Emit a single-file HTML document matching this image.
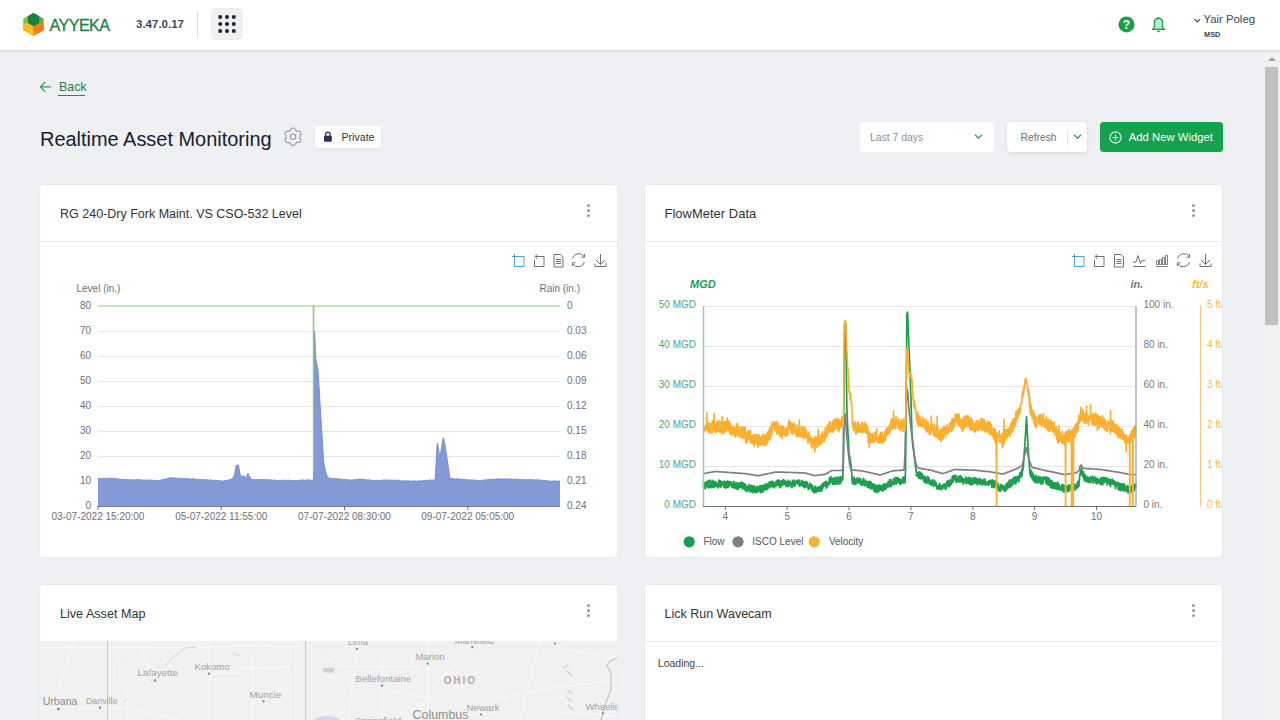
<!DOCTYPE html>
<html>
<head>
<meta charset="utf-8">
<title>Realtime Asset Monitoring</title>
<style>
*{box-sizing:border-box;margin:0;padding:0}
html,body{width:1280px;height:720px;overflow:hidden}
body{background:#EFF0F4;font-family:"Liberation Sans",sans-serif;position:relative;color:#333}
.abs{position:absolute}
#header{position:absolute;left:0;top:0;width:1280px;height:51px;background:#fff;border-bottom:1px solid #DEDFE4;box-shadow:0 1px 1px rgba(0,0,0,0.06)}
.txt{position:absolute;white-space:nowrap;line-height:1}
.card{position:absolute;background:#fff;border-radius:3px;box-shadow:0 0 0 1px rgba(0,0,0,0.025)}
.card .hd{position:absolute;left:0;top:0;right:0;height:57px;border-bottom:1px solid #E9EAEE}
.card .ttl{position:absolute;left:20px;top:22.5px;font-size:12.5px;color:#333;white-space:nowrap;line-height:1}
.kebab{position:absolute;width:3px;height:3px;border-radius:50%;background:#999}
.btn{position:absolute;background:#fff;border-radius:4px}
</style>
</head>
<body>
<div id="header">
  <svg class="abs" style="left:0;top:0" width="260" height="50" viewBox="0 0 260 50">
    <!-- hexagon logo -->
    <polygon points="33.5,13 43.5,18.8 43.5,30.2 33.5,36 23.5,30.2 23.5,18.8" fill="#F2A51C"/>
    <polygon points="23.5,18.8 33.5,13 33.5,25 23.5,30.2" fill="#86C23F"/>
    <polygon points="33.5,13 43.5,18.8 43.5,30.2 33.5,25" fill="#73A83C"/>
    <polygon points="23.5,24.5 33.5,30.2 33.5,36 23.5,30.2" fill="#F6C51A"/>
    <polygon points="33.5,30.2 43.5,24.5 43.5,30.2 33.5,36" fill="#EF8C1E"/>
    <polygon points="23.5,24.5 28.5,21.7 33.5,24.5 33.5,30.2 28.5,33 23.5,30.2" fill="#F4BC1C"/>
    <polygon points="33.5,24.5 38.5,21.7 43.5,24.5 43.5,30.2 38.5,33 33.5,30.2" fill="#EE7F1C"/>
    <polygon points="33.5,13 39.2,16.3 39.2,23 33.5,26.3 27.8,23 27.8,16.3" fill="#18803E"/>
    <!-- grid button -->
    <rect x="211" y="8" width="32" height="32" rx="5" fill="#EFF0F4"/>
    <g fill="#1E222B">
      <circle cx="220.2" cy="16.9" r="2"/><circle cx="227" cy="16.9" r="2"/><circle cx="233.8" cy="16.9" r="2"/>
      <circle cx="220.2" cy="24" r="2"/><circle cx="227" cy="24" r="2"/><circle cx="233.8" cy="24" r="2"/>
      <circle cx="220.2" cy="31" r="2"/><circle cx="227" cy="31" r="2"/><circle cx="233.8" cy="31" r="2"/>
    </g>
    <line x1="197.5" y1="12" x2="197.5" y2="38" stroke="#D9DADF" stroke-width="1"/>
  </svg>
  <div class="txt" style="left:49.5px;top:17px;font-size:16.2px;font-weight:normal;-webkit-text-stroke:0.3px #1D7E43;color:#1D7E43;letter-spacing:-0.6px">AYYEKA</div>
  <div class="txt" style="left:136px;top:18.5px;font-size:11.5px;font-weight:bold;color:#3B4658">3.47.0.17</div>
  <!-- right header -->
  <svg class="abs" style="left:1110px;top:0" width="170" height="50" viewBox="1110 0 170 50">
    <circle cx="1126.5" cy="24.4" r="8" fill="#1A9E4B"/>
    <text x="1126.5" y="28.8" font-size="12" font-weight="bold" fill="#fff" text-anchor="middle" font-family="Liberation Sans">?</text>
    <path d="M1152.6,29.3 L1164.4,29.3 L1162.6,27.4 L1162.6,22.6 C1162.6,19.9 1160.9,18.3 1158.5,18.3 C1156.1,18.3 1154.4,19.9 1154.4,22.6 L1154.4,27.4 Z" fill="#BDE8CB" stroke="#1A9E4B" stroke-width="1.3" stroke-linejoin="round"/>
    <path d="M1157.2,31.4 L1159.8,31.4" stroke="#1A9E4B" stroke-width="1.5"/>
    <circle cx="1158.5" cy="17.8" r="1" fill="#1A9E4B"/>
    <polyline points="1194.6,19.2 1197.3,22 1200,19.2" fill="none" stroke="#3B4658" stroke-width="1.2"/>
  </svg>
  <div class="txt" style="left:1203.5px;top:14px;font-size:11.35px;color:#3B4658">Yair Poleg</div>
  <div class="txt" style="left:1204px;top:30.5px;font-size:7.4px;font-weight:bold;color:#3B4658">MSD</div>
</div>

<!-- scrollbar -->
<div class="abs" style="left:1264px;top:52px;width:16px;height:668px;background:#F1F1F1"></div>
<svg class="abs" style="left:1264px;top:51px" width="16" height="20"><polygon points="4,10 8,6 12,10" fill="#A3A3A3"/></svg>
<div class="abs" style="left:1265px;top:67px;width:13px;height:258px;background:#C1C1C1"></div>

<!-- back -->
<svg class="abs" style="left:38px;top:80px" width="16" height="14" viewBox="38 80 16 14">
  <path d="M51,86.9 L40.5,86.9 M45.3,82 L40.4,86.9 L45.3,91.8" fill="none" stroke="#2E9D63" stroke-width="1.2"/>
</svg>
<div class="txt" style="left:59px;top:80.5px;font-size:12.4px;color:#1E8050">Back</div>
<div class="abs" style="left:58px;top:95px;width:27px;height:1px;background:#1E8A55"></div>

<div class="txt" style="left:40px;top:130px;font-size:19.95px;color:#171D2E">Realtime Asset Monitoring</div>
<svg class="abs" style="left:282px;top:126px" width="22" height="22" viewBox="282 126 22 22">
  <path fill="none" stroke="#9EA0A9" stroke-width="1.25" stroke-linejoin="round" d="M293.00,128.20 L293.30,128.21 L293.60,128.22 L293.90,128.25 L294.20,128.28 L294.48,128.41 L294.71,128.74 L294.92,129.09 L295.11,129.45 L295.27,129.80 L295.42,130.15 L295.62,130.31 L295.85,130.41 L296.07,130.51 L296.29,130.62 L296.50,130.74 L296.71,130.86 L296.91,131.00 L297.11,131.14 L297.31,131.28 L297.55,131.38 L297.92,131.33 L298.31,131.30 L298.72,131.28 L299.13,131.28 L299.53,131.32 L299.78,131.51 L299.96,131.75 L300.13,131.99 L300.29,132.24 L300.45,132.50 L300.59,132.76 L300.73,133.03 L300.86,133.30 L300.97,133.58 L301.01,133.89 L300.84,134.25 L300.64,134.61 L300.42,134.95 L300.19,135.27 L299.97,135.57 L299.93,135.83 L299.96,136.07 L299.98,136.31 L300.00,136.56 L300.00,136.80 L300.00,137.04 L299.98,137.29 L299.96,137.53 L299.93,137.77 L299.97,138.03 L300.19,138.33 L300.42,138.65 L300.64,138.99 L300.84,139.35 L301.01,139.71 L300.97,140.02 L300.86,140.30 L300.73,140.57 L300.59,140.84 L300.45,141.10 L300.29,141.36 L300.13,141.61 L299.96,141.85 L299.78,142.09 L299.53,142.28 L299.13,142.32 L298.72,142.32 L298.31,142.30 L297.92,142.27 L297.55,142.22 L297.31,142.32 L297.11,142.46 L296.91,142.60 L296.71,142.74 L296.50,142.86 L296.29,142.98 L296.07,143.09 L295.85,143.19 L295.62,143.29 L295.42,143.45 L295.27,143.80 L295.11,144.15 L294.92,144.51 L294.71,144.86 L294.48,145.19 L294.20,145.32 L293.90,145.35 L293.60,145.38 L293.30,145.39 L293.00,145.40 L292.70,145.39 L292.40,145.38 L292.10,145.35 L291.80,145.32 L291.52,145.19 L291.29,144.86 L291.08,144.51 L290.89,144.15 L290.73,143.80 L290.58,143.45 L290.38,143.29 L290.15,143.19 L289.93,143.09 L289.71,142.98 L289.50,142.86 L289.29,142.74 L289.09,142.60 L288.89,142.46 L288.69,142.32 L288.45,142.22 L288.08,142.27 L287.69,142.30 L287.28,142.32 L286.87,142.32 L286.47,142.28 L286.22,142.09 L286.04,141.85 L285.87,141.61 L285.71,141.36 L285.55,141.10 L285.41,140.84 L285.27,140.57 L285.14,140.30 L285.03,140.02 L284.99,139.71 L285.16,139.35 L285.36,138.99 L285.58,138.65 L285.81,138.33 L286.03,138.03 L286.07,137.77 L286.04,137.53 L286.02,137.29 L286.00,137.04 L286.00,136.80 L286.00,136.56 L286.02,136.31 L286.04,136.07 L286.07,135.83 L286.03,135.57 L285.81,135.27 L285.58,134.95 L285.36,134.61 L285.16,134.25 L284.99,133.89 L285.03,133.58 L285.14,133.30 L285.27,133.03 L285.41,132.76 L285.55,132.50 L285.71,132.24 L285.87,131.99 L286.04,131.75 L286.22,131.51 L286.47,131.32 L286.87,131.28 L287.28,131.28 L287.69,131.30 L288.08,131.33 L288.45,131.38 L288.69,131.28 L288.89,131.14 L289.09,131.00 L289.29,130.86 L289.50,130.74 L289.71,130.62 L289.93,130.51 L290.15,130.41 L290.38,130.31 L290.58,130.15 L290.73,129.80 L290.89,129.45 L291.08,129.09 L291.29,128.74 L291.52,128.41 L291.80,128.28 L292.10,128.25 L292.40,128.22 L292.70,128.21Z"/>
  <circle cx="293" cy="136.8" r="2.7" fill="none" stroke="#9EA0A9" stroke-width="1.25"/>
</svg>
<div class="btn" style="left:315px;top:126px;width:66px;height:22px;border-radius:3px;box-shadow:0 1px 3px rgba(0,0,0,0.08)"></div>
<svg class="abs" style="left:322px;top:130px" width="12" height="14" viewBox="322 130 12 14">
  <path d="M325.6,136 v-1.6 a2.3,2.3 0 0 1 4.6,0 v1.6" fill="none" stroke="#2F2E5A" stroke-width="1.3"/>
  <rect x="324" y="135.8" width="7.8" height="5.9" rx="1" fill="#2F2E5A"/>
</svg>
<div class="txt" style="left:341.5px;top:131.5px;font-size:10.6px;color:#333">Private</div>

<div class="btn" style="left:860px;top:122px;width:134px;height:30px"></div>
<div class="txt" style="left:870px;top:133px;font-size:10.4px;color:#8D919B">Last 7 days</div>
<svg class="abs" style="left:970px;top:130px" width="16" height="14"><polyline points="4.8,4.6 8.5,8.3 12.2,4.6" fill="none" stroke="#2A9D66" stroke-width="1.3"/></svg>

<div class="btn" style="left:1007px;top:122px;width:80px;height:30px;box-shadow:0 1px 4px rgba(0,0,0,0.12)"></div>
<div class="txt" style="left:1020.5px;top:133px;font-size:10.3px;color:#6B6F78">Refresh</div>
<div class="abs" style="left:1067px;top:129.5px;width:1px;height:15px;background:#E2E3E7"></div>
<svg class="abs" style="left:1069px;top:130px" width="16" height="14"><polyline points="4.8,4.6 8.5,8.3 12.2,4.6" fill="none" stroke="#2A9D66" stroke-width="1.3"/></svg>

<div class="btn" style="left:1100px;top:122px;width:123px;height:30px;background:#15A14E;border-radius:3.5px"></div>
<svg class="abs" style="left:1108px;top:130px" width="16" height="16" viewBox="1108 130 16 16">
  <circle cx="1115.5" cy="137.5" r="5.6" fill="none" stroke="#E8F8EE" stroke-width="1.1"/>
  <path d="M1115.5,134.6 v5.8 M1112.6,137.5 h5.8" stroke="#E8F8EE" stroke-width="1.1"/>
</svg>
<div class="txt" style="left:1128.8px;top:131.5px;font-size:11.3px;color:#fff">Add New Widget</div>

<!-- cards -->
<div class="card" style="left:40px;top:185px;width:577px;height:372px">
  <div class="hd"></div>
  <div class="ttl" style="left:20px;top:22.5px">RG 240-Dry Fork Maint. VS CSO-532 Level</div>
  <div class="kebab" style="left:546.8px;top:18.5px"></div><div class="kebab" style="left:546.8px;top:23.9px"></div><div class="kebab" style="left:546.8px;top:29.4px"></div>
</div>
<div class="card" style="left:645px;top:185px;width:577px;height:372px;overflow:hidden">
  <div class="hd"></div>
  <div class="ttl" style="left:19.5px;top:22.3px;font-size:13px">FlowMeter Data</div>
  <div class="kebab" style="left:546.8px;top:18.5px"></div><div class="kebab" style="left:546.8px;top:23.9px"></div><div class="kebab" style="left:546.8px;top:29.4px"></div>
</div>
<div class="card" style="left:40px;top:585px;width:577px;height:200px;overflow:hidden">
  <div class="hd"></div>
  <div class="ttl" style="left:20px;top:22.8px;font-size:12.6px">Live Asset Map</div>
  <div class="kebab" style="left:546.8px;top:18.5px"></div><div class="kebab" style="left:546.8px;top:23.9px"></div><div class="kebab" style="left:546.8px;top:29.4px"></div>
</div>
<div class="card" style="left:645px;top:585px;width:577px;height:200px">
  <div class="hd"></div>
  <div class="ttl" style="left:19.5px;top:23.3px;font-size:12.5px">Lick Run Wavecam</div>
  <div class="kebab" style="left:546.8px;top:18.5px"></div><div class="kebab" style="left:546.8px;top:23.9px"></div><div class="kebab" style="left:546.8px;top:29.4px"></div>
  <div class="txt" style="left:12.8px;top:72.8px;font-size:10.5px;color:#444">Loading...</div>
</div>

<!-- map -->
<svg class="abs" style="left:40px;top:641px" width="577" height="79" viewBox="40 641 577 79">
<rect x="40" y="641" width="577" height="79" fill="#F1F1F1"/>
<g fill="none" stroke="#FAFAFA" stroke-width="1">
  <path d="M40,647 L120,647.5 L200,647 L240,646 L300,646.5"/>
  <path d="M73.6,641 L68,660 L60,685 L52.5,720"/>
  <path d="M114,641 L114,650 L120,660 L120,685 L127.5,691.5 L127,720"/>
  <path d="M137,641 L155,680.5 L175,700 L188,720"/>
  <path d="M209.5,641 L209.5,720"/>
  <path d="M209.5,673.6 L240,673.6"/>
  <path d="M40,708 L127.5,708 L165,716.5 L180,720"/>
  <path d="M263.4,641 L252.5,660 L252,720"/>
  <path d="M296,641 L296,720"/>
  <path d="M357,641 L357,655 L352.5,680 L348,720"/>
  <path d="M382,655 L382,720"/>
  <path d="M340,666.5 L420,666.5"/>
  <path d="M382,690 L440,700 L480,712"/>
  <path d="M312,650 L340,666"/>
  <path d="M428,641 L428,720"/>
  <path d="M472,647 L450,670 L430,690 L415,720"/>
  <path d="M540,641 L535,660 L525,700 L520,720"/>
  <path d="M555,643.5 L565,650 L600,655 L617,660"/>
  <path d="M490,700 L540,690 L590,683 L617,680"/>
  <path d="M430,718 L500,712 L560,712 L617,716"/>
  <path d="M240,668 L290,667"/>
</g>
<g fill="none" stroke="#C4C4C4" stroke-width="0.9">
  <path d="M107.5,641 L107.5,720"/>
  <path d="M305.6,641 L305.6,720"/>
</g>
<g fill="none" stroke="#B8B8B8" stroke-width="1">
  <path d="M617,658 L610,661 L607,666 L611,672 L611,690 L605,705 L601,720"/>
</g>
<g fill="none" stroke="#D3D3D3" stroke-width="1">
  <path d="M165,666.5 L172,658 L185,648 L196,647"/>
  <path d="M158,682 L150,681"/>
  <path d="M233,653 L240,656"/>
  <path d="M124,703 L128,698"/>
</g>
<path d="M323,668 L334.5,667.5 L333.5,672.8 L323.5,672.5 Z" fill="#CFCFCF"/>
<g fill="none" stroke="#CDCDCD" stroke-width="1.2">
  <path d="M563,668 L568,665 M567,671 L572,676 M567,690 L573,694 M566,697 L572,701 M568,705 L573,710"/>
</g>
<ellipse cx="327" cy="728" rx="18" ry="12" fill="#D3D5F1"/>
<g font-family="Liberation Sans" fill="#A3A3A3" font-size="9">
  <text x="42.7" y="705" font-size="10.6" fill="#8E8E8E">Urbana</text>
  <text x="86" y="704" font-size="8.8">Danville</text>
  <text x="137.6" y="676" font-size="9.8">Lafayette</text>
  <text x="194.5" y="670" font-size="9.6">Kokomo</text>
  <text x="249.6" y="697.5" font-size="9.8">Muncie</text>
  <text x="347.7" y="644.5" font-size="9.4">Lima</text>
  <text x="454.8" y="644" font-size="9.2">Mansfield</text>
  <text x="415.4" y="660" font-size="9.6">Marion</text>
  <text x="355.6" y="681.5" font-size="9.6">Bellefontaine</text>
  <text x="443.7" y="684" font-size="10" font-weight="bold" letter-spacing="1.9" fill="#ABABAB">OHIO</text>
  <text x="466.5" y="710.5" font-size="9.8">Newark</text>
  <text x="412.6" y="718.5" font-size="12.4" fill="#8E8E8E">Columbus</text>
  <text x="355" y="724" font-size="9.8">Springfield</text>
  <text x="585.5" y="709.5" font-size="9.6">Wheeling</text>
</g>
<g fill="#7A7A7A">
  <circle cx="58.4" cy="709" r="1.3"/><circle cx="100" cy="707.7" r="1.1"/><circle cx="155.2" cy="680.3" r="1.1"/>
  <circle cx="209" cy="673.7" r="1.1"/><circle cx="263.5" cy="701.4" r="1.1"/><circle cx="356.8" cy="648.9" r="1.1"/>
  <circle cx="472.3" cy="647.2" r="1.1"/><circle cx="555" cy="643.5" r="1.1"/><circle cx="427.8" cy="663.7" r="1.1"/>
  <circle cx="382" cy="685.7" r="1.1"/><circle cx="481" cy="714.5" r="1.1"/><circle cx="602.9" cy="713.3" r="1.1"/>
</g>

</svg>

<!-- chart 1 -->
<svg class="abs" style="left:0;top:0;font-family:'Liberation Sans',sans-serif" width="640" height="560" viewBox="0 0 640 560">
<line x1="98" y1="331.5" x2="560" y2="331.5" stroke="#E4E6EB" stroke-width="1"/>
<line x1="98" y1="356.5" x2="560" y2="356.5" stroke="#E4E6EB" stroke-width="1"/>
<line x1="98" y1="381.5" x2="560" y2="381.5" stroke="#E4E6EB" stroke-width="1"/>
<line x1="98" y1="406.5" x2="560" y2="406.5" stroke="#E4E6EB" stroke-width="1"/>
<line x1="98" y1="431.5" x2="560" y2="431.5" stroke="#E4E6EB" stroke-width="1"/>
<line x1="98" y1="456.5" x2="560" y2="456.5" stroke="#E4E6EB" stroke-width="1"/>
<line x1="98" y1="481.5" x2="560" y2="481.5" stroke="#E4E6EB" stroke-width="1"/>
<path d="M98,506 L98,478.7 L98.5,478.5 L99,478.9 L99.5,478.4 L100,478.7 L100.5,478.6 L101,478.3 L101.5,478.6 L102,478.3 L102.5,478.5 L103,478.2 L103.5,478.2 L104,478.4 L104.5,478.7 L105,478.2 L105.5,478.2 L106,478.5 L106.5,478.7 L107,478.4 L107.5,478.3 L108,478.6 L108.5,478 L109,478.5 L109.5,478.1 L110,478 L110.5,478 L111,478.2 L111.5,478.6 L112,478.1 L112.5,478.5 L113,478.6 L113.5,478.4 L114,478.6 L114.5,478.3 L115,478.3 L115.5,478.5 L116,478.8 L116.5,478.7 L117,478.7 L117.5,478.9 L118,478.9 L118.5,478.8 L119,479.2 L119.5,479.2 L120,478.9 L120.5,479.2 L121,479.2 L121.5,479.5 L122,479.4 L122.5,479.1 L123,479.7 L123.5,479.1 L124,479.4 L124.5,479.6 L125,479.3 L125.5,479.5 L126,479.2 L126.5,479.6 L127,479.7 L127.5,479.6 L128,479.8 L128.5,479.4 L129,479.7 L129.5,479.7 L130,479.7 L130.5,479.6 L131,479.9 L131.5,479.9 L132,479.6 L132.5,479.8 L133,479.4 L133.5,479.8 L134,479.8 L134.5,480 L135,479.9 L135.5,479.6 L136,479.6 L136.5,479.8 L137,479.4 L137.5,479.7 L138,479.5 L138.5,479.5 L139,479.5 L139.5,480 L140,479.5 L140.5,479.6 L141,479.8 L141.5,480.1 L142,479.6 L142.5,479.9 L143,479.9 L143.5,480.2 L144,480.2 L144.5,480.2 L145,479.8 L145.5,479.9 L146,479.9 L146.5,480.3 L147,480.4 L147.5,479.8 L148,479.9 L148.5,479.9 L149,479.9 L149.5,480.1 L150,480.2 L150.5,480 L151,479.8 L151.5,480.1 L152,480.1 L152.5,480.3 L153,480.6 L153.5,480.4 L154,480.3 L154.5,480.4 L155,480.4 L155.5,480 L156,480.6 L156.5,480.6 L157,480.7 L157.5,480.6 L158,480.4 L158.5,480.4 L159,480.2 L159.5,480.6 L160,480.2 L160.5,480.1 L161,480 L161.5,479.9 L162,479.8 L162.5,479.5 L163,479.3 L163.5,479.3 L164,479.1 L164.5,479.2 L165,478.8 L165.5,479.3 L166,479 L166.5,478.5 L167,478.4 L167.5,478.4 L168,478.2 L168.5,477.9 L169,478.3 L169.5,478.3 L170,477.8 L170.5,477.8 L171,477.6 L171.5,477.6 L172,477.8 L172.5,477.8 L173,478.2 L173.5,477.7 L174,477.7 L174.5,478.3 L175,478.1 L175.5,477.8 L176,478.1 L176.5,477.8 L177,478.1 L177.5,478.5 L178,478.4 L178.5,478.3 L179,478.1 L179.5,478.2 L180,478 L180.5,478.5 L181,478.3 L181.5,478.5 L182,478.2 L182.5,478.2 L183,478.6 L183.5,478.8 L184,478.7 L184.5,478.7 L185,478.7 L185.5,478.7 L186,478.4 L186.5,478.6 L187,478.5 L187.5,478.3 L188,478.3 L188.5,478.5 L189,478.5 L189.5,478.9 L190,479.1 L190.5,478.8 L191,479.1 L191.5,479.2 L192,479.2 L192.5,478.8 L193,478.7 L193.5,478.8 L194,478.8 L194.5,478.8 L195,479.1 L195.5,479.3 L196,479.3 L196.5,479.1 L197,479.2 L197.5,479.4 L198,478.9 L198.5,479.3 L199,479.5 L199.5,479.5 L200,479.5 L200.5,479.3 L201,479.1 L201.5,479.6 L202,479.3 L202.5,479.7 L203,479.8 L203.5,479.5 L204,479.5 L204.5,479.9 L205,479.8 L205.5,479.4 L206,479.4 L206.5,479.5 L207,480.1 L207.5,480 L208,479.6 L208.5,480.1 L209,480.2 L209.5,480.1 L210,479.9 L210.5,480 L211,479.8 L211.5,479.7 L212,480.4 L212.5,480.3 L213,480.2 L213.5,480.5 L214,480.2 L214.5,480.5 L215,480.5 L215.5,480.2 L216,480.2 L216.5,480.3 L217,480.3 L217.5,480.6 L218,480.4 L218.5,480.5 L219,480.3 L219.5,480.9 L220,480.6 L220.5,480.7 L221,480.8 L221.5,481 L222,480.7 L222.5,481.1 L223,480.9 L223.5,480.9 L224,480.9 L224.5,480.6 L225,481 L225.5,480.6 L226,480.4 L226.5,480.8 L227,480.2 L227.5,480.3 L228,480.3 L228.5,480 L229,479.7 L229.5,479.7 L230,479.6 L230.5,479.6 L231,479 L231.5,479.2 L232,478.8 L232.5,478 L233,477.6 L233.5,476.6 L234,475.8 L234.5,475.2 L235,472.1 L235.5,468.7 L236,465.5 L236.5,465.4 L237,465.3 L237.5,465.2 L238,465.1 L238.5,465 L239,468 L239.5,471 L240,474.1 L240.5,474.8 L241,475.5 L241.5,476.4 L242,477 L242.5,476.4 L243,475.8 L243.5,475.5 L244,475.8 L244.5,477.1 L245,478.3 L245.5,477.3 L246,477 L246.5,476.8 L247,476.2 L247.5,474.5 L248,473.2 L248.5,474.6 L249,475.5 L249.5,476.8 L250,477.2 L250.5,478.1 L251,478.7 L251.5,479.3 L252,479.3 L252.5,479.7 L253,479.6 L253.5,479.3 L254,479.8 L254.5,479.8 L255,479.3 L255.5,479.8 L256,479.4 L256.5,479.5 L257,479.8 L257.5,479.7 L258,479.3 L258.5,479.5 L259,479.5 L259.5,479.4 L260,479.3 L260.5,479.4 L261,479.7 L261.5,479.2 L262,479.5 L262.5,479.5 L263,479.2 L263.5,479.4 L264,479.6 L264.5,479.5 L265,479.2 L265.5,479.9 L266,479.8 L266.5,479.9 L267,479.4 L267.5,479.5 L268,479.4 L268.5,479.9 L269,479.6 L269.5,479.5 L270,479.8 L270.5,480.2 L271,480.1 L271.5,479.8 L272,479.7 L272.5,480.3 L273,480.1 L273.5,480.2 L274,479.8 L274.5,479.8 L275,480.3 L275.5,480.1 L276,479.9 L276.5,480.6 L277,480.4 L277.5,480.5 L278,480.1 L278.5,480.6 L279,480.1 L279.5,480.7 L280,480.5 L280.5,480.4 L281,480.5 L281.5,480.8 L282,480.3 L282.5,480.2 L283,480.5 L283.5,480.3 L284,480.2 L284.5,480.3 L285,480.2 L285.5,480.3 L286,480.4 L286.5,480.4 L287,480.7 L287.5,480.4 L288,480.5 L288.5,480.3 L289,480.4 L289.5,480.2 L290,480.3 L290.5,480.2 L291,480.7 L291.5,480.5 L292,480.3 L292.5,480.5 L293,480.8 L293.5,480.2 L294,480.7 L294.5,480.5 L295,480.5 L295.5,480.7 L296,480.4 L296.5,480.5 L297,480.6 L297.5,480.8 L298,480.3 L298.5,480.6 L299,480.5 L299.5,480.4 L300,480.2 L300.5,480.1 L301,479.9 L301.5,479.9 L302,479.9 L302.5,480.3 L303,479.9 L303.5,479.8 L304,479.8 L304.5,480.3 L305,480.3 L305.5,480.1 L306,479.8 L306.5,479.8 L307,479.9 L307.5,480 L308,479.8 L308.5,480 L309,479.8 L309.5,480.3 L310,480.3 L310.5,480 L311,479.8 L311.5,480.3 L312,479.9 L312.5,479.9 L313,479.7 L313.5,479.1 L314,376.3 L314.5,330.6 L315,340 L315.5,355 L316,360 L316.5,362.5 L317,365 L317.5,367.5 L318,370 L318.5,378.2 L319,386.4 L319.5,394.6 L320,402.9 L320.5,411.1 L321,419.2 L321.5,427.3 L322,435.4 L322.5,443.6 L323,451.7 L323.5,459.8 L324,464.2 L324.5,466.3 L325,468.4 L325.5,470.4 L326,472.5 L326.5,474.4 L327,475.6 L327.5,476 L328,476.9 L328.5,477.5 L329,478.4 L329.5,478.1 L330,478.1 L330.5,478.3 L331,478.2 L331.5,478.4 L332,478.3 L332.5,478.5 L333,478.5 L333.5,478.6 L334,478.7 L334.5,478.4 L335,478.4 L335.5,478.9 L336,478.4 L336.5,478.9 L337,478.8 L337.5,478.5 L338,479.1 L338.5,479.1 L339,479 L339.5,479.1 L340,479.2 L340.5,478.8 L341,479.1 L341.5,479.2 L342,479.4 L342.5,479.5 L343,479.5 L343.5,479.4 L344,479.7 L344.5,479.6 L345,479.6 L345.5,479.4 L346,479.3 L346.5,479.4 L347,479.6 L347.5,479.5 L348,480 L348.5,479.9 L349,480 L349.5,480 L350,480.1 L350.5,479.9 L351,479.6 L351.5,480.1 L352,480 L352.5,479.8 L353,479.7 L353.5,479.8 L354,479.3 L354.5,479.7 L355,479.3 L355.5,479.2 L356,479.2 L356.5,479.5 L357,479.1 L357.5,479.4 L358,479.5 L358.5,479.1 L359,479 L359.5,479 L360,479.1 L360.5,479.2 L361,479.2 L361.5,479.2 L362,478.9 L362.5,479 L363,479.1 L363.5,479.5 L364,479.3 L364.5,479.5 L365,479.2 L365.5,479.2 L366,479.4 L366.5,479.8 L367,479.8 L367.5,479.9 L368,479.7 L368.5,479.9 L369,479.9 L369.5,479.9 L370,479.7 L370.5,480.3 L371,479.9 L371.5,480.5 L372,480.5 L372.5,479.9 L373,480.3 L373.5,480.6 L374,480.7 L374.5,480.4 L375,480.3 L375.5,480.3 L376,480.8 L376.5,480.2 L377,480.5 L377.5,480.2 L378,480.4 L378.5,480.7 L379,480.1 L379.5,480.6 L380,480.3 L380.5,480.6 L381,480.4 L381.5,480.1 L382,480.5 L382.5,480.2 L383,479.9 L383.5,479.9 L384,480.2 L384.5,480.1 L385,480 L385.5,479.9 L386,480 L386.5,480 L387,480.3 L387.5,479.7 L388,480.2 L388.5,480.3 L389,479.8 L389.5,480.3 L390,480.1 L390.5,480.3 L391,479.9 L391.5,480 L392,480 L392.5,480.5 L393,480.2 L393.5,480.1 L394,480.1 L394.5,480.1 L395,479.9 L395.5,480 L396,480.5 L396.5,480.2 L397,480.7 L397.5,480.2 L398,480.2 L398.5,480.4 L399,480.2 L399.5,480.4 L400,480.8 L400.5,480.8 L401,480.8 L401.5,480.7 L402,480.9 L402.5,480.9 L403,480.7 L403.5,480.8 L404,480.4 L404.5,480.9 L405,480.7 L405.5,481 L406,480.9 L406.5,480.7 L407,480.5 L407.5,481.2 L408,480.6 L408.5,480.9 L409,480.8 L409.5,480.8 L410,481.2 L410.5,481.3 L411,480.8 L411.5,481.1 L412,480.9 L412.5,481 L413,480.9 L413.5,480.8 L414,480.8 L414.5,480.8 L415,481.3 L415.5,481 L416,480.8 L416.5,481.3 L417,481.3 L417.5,481 L418,480.7 L418.5,480.8 L419,480.7 L419.5,480.9 L420,480.7 L420.5,480.8 L421,480.7 L421.5,480.9 L422,481.1 L422.5,480.9 L423,480.6 L423.5,480.6 L424,480.6 L424.5,480.5 L425,480.4 L425.5,480.1 L426,480.2 L426.5,480.7 L427,480 L427.5,480.3 L428,480.3 L428.5,480.4 L429,479.9 L429.5,479.9 L430,479.8 L430.5,479.9 L431,480 L431.5,480.3 L432,480.2 L432.5,480.3 L433,479.7 L433.5,479.7 L434,480.1 L434.5,480.3 L435,480 L435.5,472.4 L436,464.6 L436.5,455.8 L437,445.2 L437.5,443.1 L438,446.5 L438.5,450 L439,452.3 L439.5,454.7 L440,457 L440.5,454 L441,451 L441.5,448 L442,444.9 L442.5,441.9 L443,438.8 L443.5,437.9 L444,440.3 L444.5,442.6 L445,445 L445.5,448.2 L446,451.5 L446.5,454.8 L447,458 L447.5,461.6 L448,465.1 L448.5,468.7 L449,471.9 L449.5,475.8 L450,478.3 L450.5,478.4 L451,478.5 L451.5,478.7 L452,478.3 L452.5,478.3 L453,478.3 L453.5,478.6 L454,478.8 L454.5,479 L455,478.9 L455.5,478.9 L456,479 L456.5,478.8 L457,478.9 L457.5,478.6 L458,479.2 L458.5,478.8 L459,479.3 L459.5,479.2 L460,479 L460.5,478.9 L461,479 L461.5,479.3 L462,479.4 L462.5,479 L463,479 L463.5,479.4 L464,479.5 L464.5,479.4 L465,479.3 L465.5,479.6 L466,479.2 L466.5,479.5 L467,479.6 L467.5,480 L468,479.8 L468.5,480 L469,479.7 L469.5,479.6 L470,479.7 L470.5,480.2 L471,480 L471.5,479.8 L472,479.6 L472.5,480 L473,480.2 L473.5,480 L474,479.9 L474.5,480.3 L475,480.5 L475.5,480 L476,479.9 L476.5,480.2 L477,480.2 L477.5,480.5 L478,480.2 L478.5,480.6 L479,480.6 L479.5,480.5 L480,480.3 L480.5,480.8 L481,480.3 L481.5,480.6 L482,480.1 L482.5,480.1 L483,480.4 L483.5,480 L484,480.4 L484.5,480 L485,479.8 L485.5,479.8 L486,479.8 L486.5,480 L487,480.1 L487.5,479.5 L488,479.6 L488.5,479.4 L489,479.9 L489.5,479.3 L490,479.2 L490.5,479.1 L491,479.3 L491.5,479.6 L492,479.6 L492.5,479.4 L493,479.5 L493.5,479.5 L494,479 L494.5,478.8 L495,479.3 L495.5,479.2 L496,478.7 L496.5,479.1 L497,478.9 L497.5,478.9 L498,478.9 L498.5,478.8 L499,478.7 L499.5,478.8 L500,478.9 L500.5,479.3 L501,478.7 L501.5,479.3 L502,478.8 L502.5,478.9 L503,479.2 L503.5,479.2 L504,479 L504.5,478.7 L505,479 L505.5,478.9 L506,479.3 L506.5,478.8 L507,478.9 L507.5,479.3 L508,478.7 L508.5,478.9 L509,479.2 L509.5,479.2 L510,478.7 L510.5,478.7 L511,478.7 L511.5,479.3 L512,478.9 L512.5,479.3 L513,479.4 L513.5,479 L514,479 L514.5,479.5 L515,479.2 L515.5,479 L516,479.4 L516.5,479.1 L517,479.1 L517.5,478.9 L518,479.4 L518.5,479.6 L519,479.4 L519.5,479.6 L520,479 L520.5,479.2 L521,479.3 L521.5,479.7 L522,479.7 L522.5,479.3 L523,479.3 L523.5,479.4 L524,479.5 L524.5,479.8 L525,479.3 L525.5,479.7 L526,479.7 L526.5,479.8 L527,479.8 L527.5,479.7 L528,479.5 L528.5,479.5 L529,479.5 L529.5,479.8 L530,479.4 L530.5,479.5 L531,479.9 L531.5,479.5 L532,479.4 L532.5,479.4 L533,479.8 L533.5,479.7 L534,480.1 L534.5,480.1 L535,480.2 L535.5,479.7 L536,479.6 L536.5,479.6 L537,479.9 L537.5,480.1 L538,479.9 L538.5,479.8 L539,479.9 L539.5,480.1 L540,480.1 L540.5,480.2 L541,480.3 L541.5,480.3 L542,479.9 L542.5,480.5 L543,480.2 L543.5,480.4 L544,480.3 L544.5,480.6 L545,480.3 L545.5,480.4 L546,480.4 L546.5,480.4 L547,481 L547.5,480.8 L548,480.7 L548.5,480.8 L549,481.2 L549.5,481 L550,480.8 L550.5,481.2 L551,481.1 L551.5,481.3 L552,480.7 L552.5,481 L553,481.2 L553.5,481.2 L554,481.3 L554.5,480.7 L555,480.9 L555.5,480.7 L556,480.8 L556.5,481.3 L557,481.1 L557.5,481.3 L558,480.9 L558.5,481.3 L559,481 L559.5,480.8 L560,481.2 L560,506 Z" fill="#8699D7" stroke="none"/>
<polyline points="98,478.7 98.5,478.5 99,478.9 99.5,478.4 100,478.7 100.5,478.6 101,478.3 101.5,478.6 102,478.3 102.5,478.5 103,478.2 103.5,478.2 104,478.4 104.5,478.7 105,478.2 105.5,478.2 106,478.5 106.5,478.7 107,478.4 107.5,478.3 108,478.6 108.5,478 109,478.5 109.5,478.1 110,478 110.5,478 111,478.2 111.5,478.6 112,478.1 112.5,478.5 113,478.6 113.5,478.4 114,478.6 114.5,478.3 115,478.3 115.5,478.5 116,478.8 116.5,478.7 117,478.7 117.5,478.9 118,478.9 118.5,478.8 119,479.2 119.5,479.2 120,478.9 120.5,479.2 121,479.2 121.5,479.5 122,479.4 122.5,479.1 123,479.7 123.5,479.1 124,479.4 124.5,479.6 125,479.3 125.5,479.5 126,479.2 126.5,479.6 127,479.7 127.5,479.6 128,479.8 128.5,479.4 129,479.7 129.5,479.7 130,479.7 130.5,479.6 131,479.9 131.5,479.9 132,479.6 132.5,479.8 133,479.4 133.5,479.8 134,479.8 134.5,480 135,479.9 135.5,479.6 136,479.6 136.5,479.8 137,479.4 137.5,479.7 138,479.5 138.5,479.5 139,479.5 139.5,480 140,479.5 140.5,479.6 141,479.8 141.5,480.1 142,479.6 142.5,479.9 143,479.9 143.5,480.2 144,480.2 144.5,480.2 145,479.8 145.5,479.9 146,479.9 146.5,480.3 147,480.4 147.5,479.8 148,479.9 148.5,479.9 149,479.9 149.5,480.1 150,480.2 150.5,480 151,479.8 151.5,480.1 152,480.1 152.5,480.3 153,480.6 153.5,480.4 154,480.3 154.5,480.4 155,480.4 155.5,480 156,480.6 156.5,480.6 157,480.7 157.5,480.6 158,480.4 158.5,480.4 159,480.2 159.5,480.6 160,480.2 160.5,480.1 161,480 161.5,479.9 162,479.8 162.5,479.5 163,479.3 163.5,479.3 164,479.1 164.5,479.2 165,478.8 165.5,479.3 166,479 166.5,478.5 167,478.4 167.5,478.4 168,478.2 168.5,477.9 169,478.3 169.5,478.3 170,477.8 170.5,477.8 171,477.6 171.5,477.6 172,477.8 172.5,477.8 173,478.2 173.5,477.7 174,477.7 174.5,478.3 175,478.1 175.5,477.8 176,478.1 176.5,477.8 177,478.1 177.5,478.5 178,478.4 178.5,478.3 179,478.1 179.5,478.2 180,478 180.5,478.5 181,478.3 181.5,478.5 182,478.2 182.5,478.2 183,478.6 183.5,478.8 184,478.7 184.5,478.7 185,478.7 185.5,478.7 186,478.4 186.5,478.6 187,478.5 187.5,478.3 188,478.3 188.5,478.5 189,478.5 189.5,478.9 190,479.1 190.5,478.8 191,479.1 191.5,479.2 192,479.2 192.5,478.8 193,478.7 193.5,478.8 194,478.8 194.5,478.8 195,479.1 195.5,479.3 196,479.3 196.5,479.1 197,479.2 197.5,479.4 198,478.9 198.5,479.3 199,479.5 199.5,479.5 200,479.5 200.5,479.3 201,479.1 201.5,479.6 202,479.3 202.5,479.7 203,479.8 203.5,479.5 204,479.5 204.5,479.9 205,479.8 205.5,479.4 206,479.4 206.5,479.5 207,480.1 207.5,480 208,479.6 208.5,480.1 209,480.2 209.5,480.1 210,479.9 210.5,480 211,479.8 211.5,479.7 212,480.4 212.5,480.3 213,480.2 213.5,480.5 214,480.2 214.5,480.5 215,480.5 215.5,480.2 216,480.2 216.5,480.3 217,480.3 217.5,480.6 218,480.4 218.5,480.5 219,480.3 219.5,480.9 220,480.6 220.5,480.7 221,480.8 221.5,481 222,480.7 222.5,481.1 223,480.9 223.5,480.9 224,480.9 224.5,480.6 225,481 225.5,480.6 226,480.4 226.5,480.8 227,480.2 227.5,480.3 228,480.3 228.5,480 229,479.7 229.5,479.7 230,479.6 230.5,479.6 231,479 231.5,479.2 232,478.8 232.5,478 233,477.6 233.5,476.6 234,475.8 234.5,475.2 235,472.1 235.5,468.7 236,465.5 236.5,465.4 237,465.3 237.5,465.2 238,465.1 238.5,465 239,468 239.5,471 240,474.1 240.5,474.8 241,475.5 241.5,476.4 242,477 242.5,476.4 243,475.8 243.5,475.5 244,475.8 244.5,477.1 245,478.3 245.5,477.3 246,477 246.5,476.8 247,476.2 247.5,474.5 248,473.2 248.5,474.6 249,475.5 249.5,476.8 250,477.2 250.5,478.1 251,478.7 251.5,479.3 252,479.3 252.5,479.7 253,479.6 253.5,479.3 254,479.8 254.5,479.8 255,479.3 255.5,479.8 256,479.4 256.5,479.5 257,479.8 257.5,479.7 258,479.3 258.5,479.5 259,479.5 259.5,479.4 260,479.3 260.5,479.4 261,479.7 261.5,479.2 262,479.5 262.5,479.5 263,479.2 263.5,479.4 264,479.6 264.5,479.5 265,479.2 265.5,479.9 266,479.8 266.5,479.9 267,479.4 267.5,479.5 268,479.4 268.5,479.9 269,479.6 269.5,479.5 270,479.8 270.5,480.2 271,480.1 271.5,479.8 272,479.7 272.5,480.3 273,480.1 273.5,480.2 274,479.8 274.5,479.8 275,480.3 275.5,480.1 276,479.9 276.5,480.6 277,480.4 277.5,480.5 278,480.1 278.5,480.6 279,480.1 279.5,480.7 280,480.5 280.5,480.4 281,480.5 281.5,480.8 282,480.3 282.5,480.2 283,480.5 283.5,480.3 284,480.2 284.5,480.3 285,480.2 285.5,480.3 286,480.4 286.5,480.4 287,480.7 287.5,480.4 288,480.5 288.5,480.3 289,480.4 289.5,480.2 290,480.3 290.5,480.2 291,480.7 291.5,480.5 292,480.3 292.5,480.5 293,480.8 293.5,480.2 294,480.7 294.5,480.5 295,480.5 295.5,480.7 296,480.4 296.5,480.5 297,480.6 297.5,480.8 298,480.3 298.5,480.6 299,480.5 299.5,480.4 300,480.2 300.5,480.1 301,479.9 301.5,479.9 302,479.9 302.5,480.3 303,479.9 303.5,479.8 304,479.8 304.5,480.3 305,480.3 305.5,480.1 306,479.8 306.5,479.8 307,479.9 307.5,480 308,479.8 308.5,480 309,479.8 309.5,480.3 310,480.3 310.5,480 311,479.8 311.5,480.3 312,479.9 312.5,479.9 313,479.7 313.5,479.1 314,376.3 314.5,330.6 315,340 315.5,355 316,360 316.5,362.5 317,365 317.5,367.5 318,370 318.5,378.2 319,386.4 319.5,394.6 320,402.9 320.5,411.1 321,419.2 321.5,427.3 322,435.4 322.5,443.6 323,451.7 323.5,459.8 324,464.2 324.5,466.3 325,468.4 325.5,470.4 326,472.5 326.5,474.4 327,475.6 327.5,476 328,476.9 328.5,477.5 329,478.4 329.5,478.1 330,478.1 330.5,478.3 331,478.2 331.5,478.4 332,478.3 332.5,478.5 333,478.5 333.5,478.6 334,478.7 334.5,478.4 335,478.4 335.5,478.9 336,478.4 336.5,478.9 337,478.8 337.5,478.5 338,479.1 338.5,479.1 339,479 339.5,479.1 340,479.2 340.5,478.8 341,479.1 341.5,479.2 342,479.4 342.5,479.5 343,479.5 343.5,479.4 344,479.7 344.5,479.6 345,479.6 345.5,479.4 346,479.3 346.5,479.4 347,479.6 347.5,479.5 348,480 348.5,479.9 349,480 349.5,480 350,480.1 350.5,479.9 351,479.6 351.5,480.1 352,480 352.5,479.8 353,479.7 353.5,479.8 354,479.3 354.5,479.7 355,479.3 355.5,479.2 356,479.2 356.5,479.5 357,479.1 357.5,479.4 358,479.5 358.5,479.1 359,479 359.5,479 360,479.1 360.5,479.2 361,479.2 361.5,479.2 362,478.9 362.5,479 363,479.1 363.5,479.5 364,479.3 364.5,479.5 365,479.2 365.5,479.2 366,479.4 366.5,479.8 367,479.8 367.5,479.9 368,479.7 368.5,479.9 369,479.9 369.5,479.9 370,479.7 370.5,480.3 371,479.9 371.5,480.5 372,480.5 372.5,479.9 373,480.3 373.5,480.6 374,480.7 374.5,480.4 375,480.3 375.5,480.3 376,480.8 376.5,480.2 377,480.5 377.5,480.2 378,480.4 378.5,480.7 379,480.1 379.5,480.6 380,480.3 380.5,480.6 381,480.4 381.5,480.1 382,480.5 382.5,480.2 383,479.9 383.5,479.9 384,480.2 384.5,480.1 385,480 385.5,479.9 386,480 386.5,480 387,480.3 387.5,479.7 388,480.2 388.5,480.3 389,479.8 389.5,480.3 390,480.1 390.5,480.3 391,479.9 391.5,480 392,480 392.5,480.5 393,480.2 393.5,480.1 394,480.1 394.5,480.1 395,479.9 395.5,480 396,480.5 396.5,480.2 397,480.7 397.5,480.2 398,480.2 398.5,480.4 399,480.2 399.5,480.4 400,480.8 400.5,480.8 401,480.8 401.5,480.7 402,480.9 402.5,480.9 403,480.7 403.5,480.8 404,480.4 404.5,480.9 405,480.7 405.5,481 406,480.9 406.5,480.7 407,480.5 407.5,481.2 408,480.6 408.5,480.9 409,480.8 409.5,480.8 410,481.2 410.5,481.3 411,480.8 411.5,481.1 412,480.9 412.5,481 413,480.9 413.5,480.8 414,480.8 414.5,480.8 415,481.3 415.5,481 416,480.8 416.5,481.3 417,481.3 417.5,481 418,480.7 418.5,480.8 419,480.7 419.5,480.9 420,480.7 420.5,480.8 421,480.7 421.5,480.9 422,481.1 422.5,480.9 423,480.6 423.5,480.6 424,480.6 424.5,480.5 425,480.4 425.5,480.1 426,480.2 426.5,480.7 427,480 427.5,480.3 428,480.3 428.5,480.4 429,479.9 429.5,479.9 430,479.8 430.5,479.9 431,480 431.5,480.3 432,480.2 432.5,480.3 433,479.7 433.5,479.7 434,480.1 434.5,480.3 435,480 435.5,472.4 436,464.6 436.5,455.8 437,445.2 437.5,443.1 438,446.5 438.5,450 439,452.3 439.5,454.7 440,457 440.5,454 441,451 441.5,448 442,444.9 442.5,441.9 443,438.8 443.5,437.9 444,440.3 444.5,442.6 445,445 445.5,448.2 446,451.5 446.5,454.8 447,458 447.5,461.6 448,465.1 448.5,468.7 449,471.9 449.5,475.8 450,478.3 450.5,478.4 451,478.5 451.5,478.7 452,478.3 452.5,478.3 453,478.3 453.5,478.6 454,478.8 454.5,479 455,478.9 455.5,478.9 456,479 456.5,478.8 457,478.9 457.5,478.6 458,479.2 458.5,478.8 459,479.3 459.5,479.2 460,479 460.5,478.9 461,479 461.5,479.3 462,479.4 462.5,479 463,479 463.5,479.4 464,479.5 464.5,479.4 465,479.3 465.5,479.6 466,479.2 466.5,479.5 467,479.6 467.5,480 468,479.8 468.5,480 469,479.7 469.5,479.6 470,479.7 470.5,480.2 471,480 471.5,479.8 472,479.6 472.5,480 473,480.2 473.5,480 474,479.9 474.5,480.3 475,480.5 475.5,480 476,479.9 476.5,480.2 477,480.2 477.5,480.5 478,480.2 478.5,480.6 479,480.6 479.5,480.5 480,480.3 480.5,480.8 481,480.3 481.5,480.6 482,480.1 482.5,480.1 483,480.4 483.5,480 484,480.4 484.5,480 485,479.8 485.5,479.8 486,479.8 486.5,480 487,480.1 487.5,479.5 488,479.6 488.5,479.4 489,479.9 489.5,479.3 490,479.2 490.5,479.1 491,479.3 491.5,479.6 492,479.6 492.5,479.4 493,479.5 493.5,479.5 494,479 494.5,478.8 495,479.3 495.5,479.2 496,478.7 496.5,479.1 497,478.9 497.5,478.9 498,478.9 498.5,478.8 499,478.7 499.5,478.8 500,478.9 500.5,479.3 501,478.7 501.5,479.3 502,478.8 502.5,478.9 503,479.2 503.5,479.2 504,479 504.5,478.7 505,479 505.5,478.9 506,479.3 506.5,478.8 507,478.9 507.5,479.3 508,478.7 508.5,478.9 509,479.2 509.5,479.2 510,478.7 510.5,478.7 511,478.7 511.5,479.3 512,478.9 512.5,479.3 513,479.4 513.5,479 514,479 514.5,479.5 515,479.2 515.5,479 516,479.4 516.5,479.1 517,479.1 517.5,478.9 518,479.4 518.5,479.6 519,479.4 519.5,479.6 520,479 520.5,479.2 521,479.3 521.5,479.7 522,479.7 522.5,479.3 523,479.3 523.5,479.4 524,479.5 524.5,479.8 525,479.3 525.5,479.7 526,479.7 526.5,479.8 527,479.8 527.5,479.7 528,479.5 528.5,479.5 529,479.5 529.5,479.8 530,479.4 530.5,479.5 531,479.9 531.5,479.5 532,479.4 532.5,479.4 533,479.8 533.5,479.7 534,480.1 534.5,480.1 535,480.2 535.5,479.7 536,479.6 536.5,479.6 537,479.9 537.5,480.1 538,479.9 538.5,479.8 539,479.9 539.5,480.1 540,480.1 540.5,480.2 541,480.3 541.5,480.3 542,479.9 542.5,480.5 543,480.2 543.5,480.4 544,480.3 544.5,480.6 545,480.3 545.5,480.4 546,480.4 546.5,480.4 547,481 547.5,480.8 548,480.7 548.5,480.8 549,481.2 549.5,481 550,480.8 550.5,481.2 551,481.1 551.5,481.3 552,480.7 552.5,481 553,481.2 553.5,481.2 554,481.3 554.5,480.7 555,480.9 555.5,480.7 556,480.8 556.5,481.3 557,481.1 557.5,481.3 558,480.9 558.5,481.3 559,481 559.5,480.8 560,481.2" fill="none" stroke="#7286CD" stroke-width="0.9"/>
<line x1="98" y1="506.5" x2="560" y2="506.5" stroke="#7A7C88" stroke-width="1"/>
<line x1="98" y1="506" x2="98" y2="510" stroke="#6E7079" stroke-width="1"/>
<line x1="221.25" y1="506" x2="221.25" y2="510" stroke="#6E7079" stroke-width="1"/>
<line x1="344.5" y1="506" x2="344.5" y2="510" stroke="#6E7079" stroke-width="1"/>
<line x1="467.75" y1="506" x2="467.75" y2="510" stroke="#6E7079" stroke-width="1"/>
<polyline points="98,306 313.3,306 313.5,472 313.8,306 560,306" fill="none" stroke="#91CC75" stroke-width="1.2"/>
<text x="91" y="308.6" font-size="10" fill="#6E7079" text-anchor="end" font-weight="normal" font-style="normal" >80</text>
<text x="567" y="308.6" font-size="10" fill="#6E7079" text-anchor="start" font-weight="normal" font-style="normal" >0</text>
<text x="91" y="333.6" font-size="10" fill="#6E7079" text-anchor="end" font-weight="normal" font-style="normal" >70</text>
<text x="567" y="333.6" font-size="10" fill="#6E7079" text-anchor="start" font-weight="normal" font-style="normal" >0.03</text>
<text x="91" y="358.6" font-size="10" fill="#6E7079" text-anchor="end" font-weight="normal" font-style="normal" >60</text>
<text x="567" y="358.6" font-size="10" fill="#6E7079" text-anchor="start" font-weight="normal" font-style="normal" >0.06</text>
<text x="91" y="383.6" font-size="10" fill="#6E7079" text-anchor="end" font-weight="normal" font-style="normal" >50</text>
<text x="567" y="383.6" font-size="10" fill="#6E7079" text-anchor="start" font-weight="normal" font-style="normal" >0.09</text>
<text x="91" y="408.6" font-size="10" fill="#6E7079" text-anchor="end" font-weight="normal" font-style="normal" >40</text>
<text x="567" y="408.6" font-size="10" fill="#6E7079" text-anchor="start" font-weight="normal" font-style="normal" >0.12</text>
<text x="91" y="433.6" font-size="10" fill="#6E7079" text-anchor="end" font-weight="normal" font-style="normal" >30</text>
<text x="567" y="433.6" font-size="10" fill="#6E7079" text-anchor="start" font-weight="normal" font-style="normal" >0.15</text>
<text x="91" y="458.6" font-size="10" fill="#6E7079" text-anchor="end" font-weight="normal" font-style="normal" >20</text>
<text x="567" y="458.6" font-size="10" fill="#6E7079" text-anchor="start" font-weight="normal" font-style="normal" >0.18</text>
<text x="91" y="483.6" font-size="10" fill="#6E7079" text-anchor="end" font-weight="normal" font-style="normal" >10</text>
<text x="567" y="483.6" font-size="10" fill="#6E7079" text-anchor="start" font-weight="normal" font-style="normal" >0.21</text>
<text x="91" y="508.6" font-size="10" fill="#6E7079" text-anchor="end" font-weight="normal" font-style="normal" >0</text>
<text x="567" y="508.6" font-size="10" fill="#6E7079" text-anchor="start" font-weight="normal" font-style="normal" >0.24</text>
<text x="76.5" y="292" font-size="10" fill="#6E7079" text-anchor="start" font-weight="normal" font-style="normal" >Level (in.)</text>
<text x="580" y="292" font-size="10" fill="#6E7079" text-anchor="end" font-weight="normal" font-style="normal" >Rain (in.)</text>
<text x="98" y="519.5" font-size="10" fill="#6E7079" text-anchor="middle" font-weight="normal" font-style="normal" >03-07-2022 15:20:00</text>
<text x="221.25" y="519.5" font-size="10" fill="#6E7079" text-anchor="middle" font-weight="normal" font-style="normal" >05-07-2022 11:55:00</text>
<text x="344.5" y="519.5" font-size="10" fill="#6E7079" text-anchor="middle" font-weight="normal" font-style="normal" >07-07-2022 08:30:00</text>
<text x="467.75" y="519.5" font-size="10" fill="#6E7079" text-anchor="middle" font-weight="normal" font-style="normal" >09-07-2022 05:05:00</text>
<g fill="none" stroke="#707070" stroke-width="1">
  <!-- toolbox chart1 -->
  <path d="M514.5,254 v12.5 h9.5 v-10 h-12" stroke="#4A9FCC"/>
  <path d="M534.5,259.5 v7 h9.5 v-10 h-8.5 M537.5,254 l-2.5,2.5 l2.5,2.5"/>
  <path d="M554,254.5 h6.5 l2.5,2.5 v10 h-9 z M556,259.5 h5 M556,261.5 h5 M556,263.5 h5"/>
  <path d="M584.5,262 a6.5,6.5 0 0 1 -11.8,1.8 M572.6,258.5 a6.5,6.5 0 0 1 11.8,-1.8 M584.6,253.8 v3.4 h-3.2 M572.4,266.2 v-3.4 h3.2"/>
  <path d="M600.5,254 v10.5 M596,260 l4.5,4.5 l4.5,-4.5 M595,263.5 v3 h11 v-3"/>
</g>
</svg>

<!-- chart 2 -->
<svg class="abs" style="left:645px;top:185px;font-family:'Liberation Sans',sans-serif" width="577" height="372" viewBox="645 185 577 372">
<line x1="703" y1="306.5" x2="1136" y2="306.5" stroke="#E4E6EB" stroke-width="1"/>
<line x1="703" y1="346.5" x2="1136" y2="346.5" stroke="#E4E6EB" stroke-width="1"/>
<line x1="703" y1="386.5" x2="1136" y2="386.5" stroke="#E4E6EB" stroke-width="1"/>
<line x1="703" y1="426.5" x2="1136" y2="426.5" stroke="#E4E6EB" stroke-width="1"/>
<line x1="703" y1="466.5" x2="1136" y2="466.5" stroke="#E4E6EB" stroke-width="1"/>
<polyline points="703.5,488.2 703.7,482.2 703.9,488 704.2,486.6 704.4,483.5 704.6,484.9 704.8,487.9 705,485.5 705.3,489 705.5,482.7 705.7,487 705.9,483.8 706.1,482 706.4,486.9 706.6,486.9 706.8,486.3 707,483.5 707.2,481.4 707.5,484.5 707.7,482 707.9,486.1 708.1,486.8 708.3,480.7 708.6,488 708.8,484.2 709,487.1 709.2,481.8 709.4,485.5 709.7,481.2 709.9,480.2 710.1,485.2 710.3,487.6 710.5,480.4 710.8,485.1 711,485.5 711.2,481.4 711.4,486.8 711.6,487.5 711.9,482.2 712.1,481.5 712.3,484.8 712.5,485.5 712.7,481.2 713,480.5 713.2,487.5 713.4,481.9 713.6,481.7 713.8,484.8 714.1,487.5 714.3,484.9 714.5,482.7 714.7,483.7 714.9,481.7 715.2,482.3 715.4,486.1 715.6,484.2 715.8,484.4 716,482 716.3,486.6 716.5,483 716.7,485.8 716.9,485.2 717.1,483 717.4,485.9 717.6,484.1 717.8,484.8 718,487.9 718.2,487.4 718.5,486.2 718.7,485 718.9,480.1 719.1,482 719.3,486.4 719.6,481.6 719.8,480.6 720,482.7 720.2,483.4 720.4,483.8 720.7,481 720.9,487 721.1,487.2 721.3,482.7 721.5,481.5 721.8,482.5 722,481.9 722.2,483 722.4,483.2 722.6,483.4 722.9,482.3 723.1,485.8 723.3,483.2 723.5,484.1 723.7,486.8 724,481.7 724.2,482 724.4,481.1 724.6,487.3 724.8,483 725.1,487 725.3,485.4 725.5,483.5 725.7,488.3 725.9,484.9 726.2,481.5 726.4,487.8 726.6,483.6 726.8,482.9 727,487.3 727.3,485.1 727.5,487.2 727.7,480.8 727.9,481.2 728.1,487.2 728.4,486.4 728.6,486 728.8,486.7 729,484.5 729.2,485.8 729.5,485.7 729.7,481.5 729.9,485.3 730.1,481.8 730.3,483.4 730.6,483.6 730.8,484.1 731,482.1 731.2,482.1 731.4,483.4 731.7,485.1 731.9,487 732.1,487.4 732.3,487.3 732.5,486.5 732.8,485.6 733,486.6 733.2,487.7 733.4,481.6 733.6,487 733.9,485.3 734.1,486.1 734.3,487.6 734.5,482.4 734.7,482.2 735,488.4 735.2,488.1 735.4,486.7 735.6,487.5 735.8,488.3 736.1,485.5 736.3,483.5 736.5,483.5 736.7,488.1 736.9,489.2 737.2,482.7 737.4,488.7 737.6,487.8 737.8,489.4 738,486.1 738.3,488.3 738.5,488.6 738.7,483.2 738.9,488.2 739.1,486.3 739.4,486.7 739.6,487.2 739.8,484.2 740,483.2 740.2,483.7 740.5,487.2 740.7,482.3 740.9,484.8 741.1,484.7 741.3,484.5 741.6,487.3 741.8,482.2 742,486.2 742.2,488.2 742.4,489 742.7,482.7 742.9,487.8 743.1,483.1 743.3,484.3 743.5,485.5 743.8,488.3 744,484.8 744.2,483.6 744.4,488.6 744.6,484.8 744.9,488.1 745.1,490.2 745.3,487 745.5,484.5 745.7,487.1 746,490.5 746.2,489.5 746.4,491.6 746.6,490.7 746.8,486.3 747.1,489.6 747.3,486.3 747.5,490.3 747.7,486.8 747.9,488.9 748.2,490.9 748.4,486.3 748.6,490.4 748.8,487.2 749,484.7 749.3,488.2 749.5,486 749.7,486.9 749.9,488 750.1,491.8 750.4,491.7 750.6,491.5 750.8,488.9 751,489.6 751.2,485.2 751.5,486.2 751.7,491.7 751.9,491.6 752.1,492.2 752.3,485.9 752.6,492.8 752.8,488.9 753,491.8 753.2,488 753.4,487.1 753.7,490.2 753.9,486.2 754.1,485.8 754.3,491.2 754.5,492.1 754.8,492.4 755,492.3 755.2,491.7 755.4,490.3 755.6,489.8 755.9,487 756.1,492.3 756.3,488.8 756.5,486.5 756.7,492.6 757,486.6 757.2,487.2 757.4,489.2 757.6,486.8 757.8,491.6 758.1,489 758.3,491.2 758.5,490.1 758.7,488.9 758.9,489.1 759.2,486.9 759.4,490.4 759.6,490.4 759.8,485.6 760,491.2 760.3,492.6 760.5,492.6 760.7,485.9 760.9,485.6 761.1,490.2 761.4,486.9 761.6,492.1 761.8,485.8 762,491.9 762.2,489.5 762.5,486.2 762.7,489.8 762.9,487.4 763.1,492 763.3,485.5 763.6,485.2 763.8,488.1 764,486.4 764.2,489.9 764.4,486.5 764.7,485.1 764.9,487.8 765.1,487.4 765.3,487 765.5,489.7 765.8,484.2 766,489.9 766.2,486.6 766.4,485.2 766.6,488.2 766.9,483.5 767.1,488.1 767.3,489.3 767.5,488.9 767.7,488.4 768,484.8 768.2,487.8 768.4,484.7 768.6,484.2 768.8,487.7 769.1,482.4 769.3,488 769.5,481.8 769.7,484.2 769.9,482 770.2,485 770.4,483 770.6,486.4 770.8,481.5 771,486.8 771.3,481.7 771.5,482 771.7,484.1 771.9,482.8 772.1,487 772.4,483.7 772.6,481.2 772.8,485.3 773,486.4 773.2,484.8 773.5,483.7 773.7,482.7 773.9,485.3 774.1,487.8 774.3,487.8 774.6,484.7 774.8,486.8 775,482.9 775.2,482.7 775.4,484.5 775.7,482.4 775.9,482.7 776.1,485.9 776.3,483.7 776.5,480.5 776.8,483.8 777,482.3 777.2,485.5 777.4,483.3 777.6,480.2 777.9,482.4 778.1,480.7 778.3,484.9 778.5,485.2 778.7,483.3 779,483.4 779.2,480.2 779.4,486.5 779.6,481.8 779.8,487.4 780.1,485.8 780.3,487.6 780.5,483.3 780.7,486.6 780.9,481.5 781.2,480.8 781.4,485.4 781.6,482.2 781.8,484.8 782,486 782.3,481.6 782.5,480.5 782.7,481.2 782.9,482.1 783.1,479.5 783.4,479.5 783.6,484.6 783.8,479.8 784,480.6 784.2,481.2 784.5,481.3 784.7,481.4 784.9,480.7 785.1,483.6 785.3,484.4 785.6,482.9 785.8,481.6 786,486.6 786.2,482 786.4,485.8 786.7,482.9 786.9,484.7 787.1,485.6 787.3,485.5 787.5,481.3 787.8,480.9 788,480.2 788.2,486.7 788.4,482.9 788.6,482 788.9,485.5 789.1,482.2 789.3,485.1 789.5,484.8 789.7,485.5 790,484.7 790.2,481 790.4,481.4 790.6,482.1 790.8,482.9 791.1,486.1 791.3,485.3 791.5,487.4 791.7,483.2 791.9,487.7 792.2,487 792.4,484.5 792.6,480.5 792.8,483 793,480.7 793.3,484.5 793.5,482.2 793.7,485.4 793.9,480.7 794.1,480 794.4,484.9 794.6,486.3 794.8,484.5 795,486.3 795.2,481.5 795.5,481.6 795.7,482.9 795.9,483.4 796.1,482.4 796.3,480.5 796.6,481.9 796.8,483 797,483.7 797.2,481.9 797.4,482.7 797.7,480.3 797.9,484.2 798.1,480.3 798.3,484.1 798.5,480.4 798.8,480.8 799,482.6 799.2,480.5 799.4,486.5 799.6,480.2 799.9,481.9 800.1,483.4 800.3,484.4 800.5,484 800.7,483.6 801,485.5 801.2,484 801.4,483.4 801.6,483.8 801.8,482 802.1,480.3 802.3,483.4 802.5,482.4 802.7,486.5 802.9,486 803.2,485.7 803.4,485.8 803.6,484.5 803.8,482.3 804,481.5 804.3,487.8 804.5,485.8 804.7,484.6 804.9,485.4 805.1,482.6 805.4,482 805.6,487.5 805.8,483.3 806,481.7 806.2,483.2 806.5,486.2 806.7,482.8 806.9,484.1 807.1,483.1 807.3,482.4 807.6,486.6 807.8,487.9 808,485.5 808.2,486 808.4,489.6 808.7,486.2 808.9,487.9 809.1,488.7 809.3,484.5 809.5,487 809.8,483.1 810,485.6 810.2,486.6 810.4,484.8 810.6,488.1 810.9,487.6 811.1,484.3 811.3,487.7 811.5,486 811.7,488.9 812,490.3 812.2,485.2 812.4,487.3 812.6,485.9 812.8,491.6 813.1,487.9 813.3,491.5 813.5,491.8 813.7,488.7 813.9,490.9 814.2,490.6 814.4,492.9 814.6,492.3 814.8,487.1 815,486.1 815.3,489.7 815.5,491.2 815.7,486.5 815.9,487.7 816.1,492.4 816.4,489.3 816.6,490.6 816.8,489.1 817,489.8 817.2,488.5 817.5,491.7 817.7,487.4 817.9,490.8 818.1,488.7 818.3,490.3 818.6,488.9 818.8,486.9 819,491.3 819.2,489 819.4,490.2 819.7,488.2 819.9,491 820.1,491.2 820.3,486 820.5,489.1 820.8,487.2 821,488.4 821.2,490.8 821.4,488.1 821.6,491.1 821.9,485.1 822.1,484.1 822.3,489.6 822.5,488 822.7,488.5 823,484.5 823.2,487.1 823.4,484.3 823.6,482.5 823.8,482.5 824.1,485.8 824.3,483.7 824.5,482.7 824.7,482.7 824.9,483.7 825.2,483.6 825.4,486.3 825.6,481.4 825.8,486.5 826,481.8 826.3,488.1 826.5,482.1 826.7,481.7 826.9,486.7 827.1,487 827.4,485.5 827.6,483.3 827.8,482.8 828,483.1 828.2,485.5 828.5,482.3 828.7,484.4 828.9,482.3 829.1,484.1 829.3,478.3 829.6,484.2 829.8,478.6 830,479.8 830.2,481.9 830.4,476.9 830.7,482.2 830.9,480.6 831.1,477.2 831.3,477.2 831.5,481.9 831.8,479.2 832,481.7 832.2,478.1 832.4,484.3 832.6,478.8 832.9,480.3 833.1,483.6 833.3,481 833.5,484.6 833.7,478.6 834,478.7 834.2,483.7 834.4,482.2 834.6,477.5 834.8,478.7 835.1,483.9 835.3,479.5 835.5,479 835.7,479.1 835.9,484.5 836.2,481.3 836.4,477.2 836.6,482.3 836.8,478.2 837,478.8 837.3,479.3 837.5,483.2 837.7,482.8 837.9,483.7 838.1,484.4 838.4,477.2 838.6,482.1 838.8,481.6 839,480 839.2,481.8 839.5,483.6 839.7,477.3 839.9,481.1 840.1,479 840.3,481.9 840.6,483.3 840.8,476.8 841,481.7 841.2,480.4 841.4,479.3 841.7,481.1 841.9,479.7 842.1,479.3 842.3,476.4 842.5,479.8 842.8,479.7 843,469.8 843.2,470.9 843.4,446.5 843.6,423.4 843.9,400.5 844.1,377.4 844.3,354 844.5,332.4 844.7,323.3 845,324 845.2,322.8 845.4,323.8 845.6,322.9 845.8,325.7 846.1,345 846.3,362.4 846.5,380.6 846.7,396 846.9,409.4 847.2,417.5 847.4,420.8 847.6,426.6 847.8,429.3 848,434.1 848.3,439.1 848.5,442 848.7,446.6 848.9,451.4 849.1,453.9 849.4,455 849.6,456.4 849.8,456.9 850,459.8 850.2,460.1 850.5,461.3 850.7,462.4 850.9,463.7 851.1,467.4 851.3,471.2 851.6,471.3 851.8,474.2 852,479 852.2,482.8 852.4,479.2 852.7,483.8 852.9,482.5 853.1,481.9 853.3,477.8 853.5,483.8 853.8,477.2 854,480 854.2,478.9 854.4,478.3 854.6,479.4 854.9,484.5 855.1,483.7 855.3,484.3 855.5,479.4 855.7,484.1 856,484.2 856.2,481 856.4,479 856.6,479.5 856.8,480.4 857.1,481.4 857.3,477.9 857.5,481.8 857.7,480.8 857.9,482.3 858.2,481.9 858.4,480.2 858.6,483.2 858.8,483 859,479.6 859.3,478.2 859.5,480.2 859.7,482.5 859.9,481.4 860.1,482.3 860.4,482 860.6,484.5 860.8,478.9 861,482.4 861.2,484 861.5,484.9 861.7,485 861.9,484.6 862.1,481.7 862.3,484.2 862.6,485.4 862.8,482.9 863,482.6 863.2,479.1 863.4,480.8 863.7,478.4 863.9,483.3 864.1,484.6 864.3,484.5 864.5,484.9 864.8,481.6 865,484.4 865.2,485.9 865.4,480.3 865.6,481.9 865.9,484.2 866.1,483.5 866.3,482.3 866.5,484 866.7,481.5 867,485.6 867.2,486.1 867.4,487.5 867.6,481.8 867.8,485.8 868.1,483.6 868.3,486.4 868.5,487.4 868.7,481.3 868.9,488 869.2,484.9 869.4,487.6 869.6,485.3 869.8,484.8 870,482.1 870.3,481.5 870.5,482.8 870.7,487.8 870.9,489.1 871.1,487.6 871.4,482.7 871.6,487.1 871.8,485.2 872,487.2 872.2,485.3 872.5,484.3 872.7,488.4 872.9,486.9 873.1,488.8 873.3,487.8 873.6,483.9 873.8,490.6 874,484.2 874.2,485.7 874.4,486.4 874.7,491.9 874.9,487.5 875.1,491.7 875.3,485.1 875.5,487.5 875.8,488.4 876,490.8 876.2,492.3 876.4,491.1 876.6,492.3 876.9,485.5 877.1,487.3 877.3,490.4 877.5,489.6 877.7,491.7 878,487.7 878.2,485.5 878.4,492.1 878.6,491.7 878.8,491.4 879.1,487.3 879.3,487.8 879.5,484.9 879.7,486.6 879.9,489.5 880.2,490.2 880.4,489.5 880.6,489.6 880.8,489 881,485.7 881.3,485.8 881.5,490.1 881.7,486.7 881.9,487.2 882.1,487.8 882.4,487 882.6,491.2 882.8,487.7 883,491 883.2,484 883.5,485.3 883.7,489.4 883.9,489.5 884.1,486.3 884.3,487.6 884.6,487.4 884.8,487.4 885,483.9 885.2,484.1 885.4,489.7 885.7,484.7 885.9,485.4 886.1,488.5 886.3,486.3 886.5,487 886.8,487.5 887,483.5 887.2,486.4 887.4,483 887.6,484.6 887.9,486.2 888.1,481.7 888.3,485.7 888.5,486 888.7,487 889,485.8 889.2,483 889.4,482.8 889.6,479.6 889.8,479.6 890.1,482.9 890.3,482.3 890.5,482.3 890.7,486.7 890.9,479.9 891.2,486.6 891.4,481.3 891.6,481.2 891.8,481.5 892,482.3 892.3,482.9 892.5,482.6 892.7,483.5 892.9,482.2 893.1,484.9 893.4,478.7 893.6,479.1 893.8,483.9 894,479.4 894.2,484.3 894.5,481.4 894.7,483.3 894.9,480.6 895.1,483.3 895.3,477.4 895.6,481.4 895.8,480.2 896,480.4 896.2,484.1 896.4,478.2 896.7,483.4 896.9,477.7 897.1,478.9 897.3,482.1 897.5,477.5 897.8,478.9 898,482.5 898.2,478.4 898.4,478.5 898.6,481.3 898.9,479.1 899.1,478.6 899.3,482 899.5,480.8 899.7,484.1 900,479.7 900.2,484.5 900.4,479.6 900.6,480.6 900.8,482.3 901.1,481.5 901.3,483.6 901.5,482.1 901.7,482.2 901.9,483.1 902.2,479.4 902.4,478.9 902.6,481.4 902.8,477.6 903,478.7 903.3,482.8 903.5,477.1 903.7,477.1 903.9,479.6 904.1,481.1 904.4,476.5 904.6,477.1 904.8,480.2 905,483 905.2,479.4 905.5,469.4 905.7,451.9 905.9,436.2 906.1,411.9 906.3,380.6 906.6,347.7 906.8,316.4 907,313.7 907.2,313.9 907.4,312 907.7,314 907.9,319.5 908.1,325.2 908.3,331.4 908.5,336.2 908.8,341.9 909,348.7 909.2,351.9 909.4,357.4 909.6,362.3 909.9,367.4 910.1,373.3 910.3,377.1 910.5,385.7 910.7,392.9 911,399.9 911.2,406.6 911.4,415.4 911.6,421.5 911.8,430.3 912.1,435.9 912.3,437 912.5,439.5 912.7,441.8 912.9,443.1 913.2,445.4 913.4,447.1 913.6,450.1 913.8,452 914,455.3 914.3,457.2 914.5,458 914.7,460.9 914.9,462.8 915.1,463.4 915.4,465.7 915.6,468.2 915.8,468.6 916,470.6 916.2,470 916.5,476 916.7,472.9 916.9,475.8 917.1,472.1 917.3,472.7 917.6,474.4 917.8,474.8 918,476.5 918.2,473 918.4,475.7 918.7,478.5 918.9,474.3 919.1,476.3 919.3,471.9 919.5,478.3 919.8,475.5 920,476.5 920.2,473.9 920.4,472.4 920.6,473.2 920.9,478.2 921.1,479 921.3,477.5 921.5,473.9 921.7,476.7 922,473.3 922.2,475.4 922.4,478.6 922.6,475.2 922.8,476.5 923.1,478.7 923.3,477.7 923.5,480.4 923.7,477 923.9,480.6 924.2,482 924.4,482.1 924.6,476 924.8,479.1 925,479.3 925.3,477.7 925.5,477.1 925.7,477.3 925.9,482.9 926.1,478.4 926.4,480.7 926.6,480.8 926.8,482.1 927,483.4 927.2,480.8 927.5,477.3 927.7,476.6 927.9,479.1 928.1,481.3 928.3,479.4 928.6,482.7 928.8,477.5 929,483.4 929.2,479.3 929.4,484.1 929.7,479.9 929.9,483.9 930.1,480.6 930.3,480.6 930.5,480.8 930.8,484.5 931,482.3 931.2,485.4 931.4,481.2 931.6,483.9 931.9,483.9 932.1,481.6 932.3,482.9 932.5,479.5 932.7,484.8 933,485.3 933.2,484.6 933.4,485.3 933.6,481.5 933.8,486.4 934.1,484 934.3,485.7 934.5,483 934.7,480.3 934.9,483.4 935.2,485.5 935.4,483.5 935.6,485.4 935.8,485.6 936,482.8 936.3,483 936.5,488.3 936.7,488.8 936.9,487.1 937.1,486.5 937.4,488.8 937.6,486.8 937.8,487.5 938,485.9 938.2,486.5 938.5,487.1 938.7,488.8 938.9,484.9 939.1,489.1 939.3,487.1 939.6,483.3 939.8,485.8 940,487 940.2,487.5 940.4,488.9 940.7,487.3 940.9,485.8 941.1,489.9 941.3,488 941.5,489.5 941.8,487.1 942,485.6 942.2,488.8 942.4,487 942.6,486.3 942.9,488.3 943.1,487.4 943.3,484.6 943.5,486.1 943.7,484.5 944,485.8 944.2,484.7 944.4,483.9 944.6,483.7 944.8,485.9 945.1,488.3 945.3,489.3 945.5,488.1 945.7,485.1 945.9,488.5 946.2,487.5 946.4,487.9 946.6,486.9 946.8,481.5 947,481.5 947.3,484.6 947.5,480.5 947.7,485.5 947.9,482.2 948.1,483.5 948.4,481.6 948.6,484.2 948.8,481.4 949,486.9 949.2,483.7 949.5,483 949.7,483.1 949.9,479.9 950.1,481.7 950.3,485.5 950.6,483.2 950.8,480.4 951,481.6 951.2,484.3 951.4,480.2 951.7,481.5 951.9,482.2 952.1,477.5 952.3,481.1 952.5,476.4 952.8,475.9 953,482.5 953.2,476.8 953.4,479.9 953.6,475.5 953.9,479.5 954.1,479.1 954.3,476.9 954.5,479.8 954.7,476.6 955,476.3 955.2,478.4 955.4,475.1 955.6,480.6 955.8,480 956.1,479.1 956.3,482.4 956.5,476.1 956.7,480.1 956.9,479 957.2,478.2 957.4,481.4 957.6,481.6 957.8,481.7 958,480.4 958.3,481.3 958.5,477.9 958.7,476.5 958.9,481 959.1,481.8 959.4,477.3 959.6,478.8 959.8,476.9 960,482.1 960.2,475.5 960.5,480.5 960.7,479.9 960.9,480.6 961.1,481.9 961.3,476.5 961.6,480.1 961.8,480.4 962,481.1 962.2,478.1 962.4,481.5 962.7,478.6 962.9,483.8 963.1,481.5 963.3,478.7 963.5,483.6 963.8,480.9 964,479.8 964.2,481 964.4,480.1 964.6,480.6 964.9,481.7 965.1,479 965.3,480.7 965.5,481.3 965.7,477.1 966,483.4 966.2,477.8 966.4,481.9 966.6,482.4 966.8,483.7 967.1,478.3 967.3,479.5 967.5,479.8 967.7,481.7 967.9,479.9 968.2,480 968.4,481.6 968.6,477.4 968.8,483.6 969,480.5 969.3,483.5 969.5,480.2 969.7,484.1 969.9,478.7 970.1,479.9 970.4,477.5 970.6,484 970.8,484.6 971,484.8 971.2,478.5 971.5,482.1 971.7,484.7 971.9,482.4 972.1,480 972.3,479.9 972.6,479.2 972.8,482.2 973,480.5 973.2,477.8 973.4,484.1 973.7,483 973.9,481.1 974.1,477.8 974.3,479.7 974.5,482.6 974.8,478.9 975,479.9 975.2,481.1 975.4,483.3 975.6,477.9 975.9,483.3 976.1,480.6 976.3,482.5 976.5,478.5 976.7,480.4 977,483.8 977.2,481.4 977.4,485.1 977.6,481.4 977.8,482.4 978.1,480.2 978.3,479.1 978.5,479.8 978.7,481.4 978.9,483.4 979.2,480.3 979.4,480.9 979.6,478.4 979.8,483.6 980,479.7 980.3,484.5 980.5,481.3 980.7,483.4 980.9,482.4 981.1,479.5 981.4,483.2 981.6,480.1 981.8,483.2 982,483 982.2,485.2 982.5,482.7 982.7,484.5 982.9,483.1 983.1,482.9 983.3,479.6 983.6,479.7 983.8,480.7 984,480.8 984.2,479.3 984.4,484.3 984.7,484.7 984.9,479 985.1,480.3 985.3,483.3 985.5,485.1 985.8,485.3 986,483.6 986.2,484.7 986.4,484.5 986.6,483 986.9,483.6 987.1,482 987.3,483.8 987.5,481.5 987.7,484.2 988,482.6 988.2,481.7 988.4,485.5 988.6,485.5 988.8,481 989.1,484 989.3,483.2 989.5,480.6 989.7,481.4 989.9,481.6 990.2,481.6 990.4,483.7 990.6,481 990.8,482.6 991,480.2 991.3,482.5 991.5,480.6 991.7,487.3 991.9,485.2 992.1,481.2 992.4,481.5 992.6,479.9 992.8,485.2 993,481.1 993.2,485.1 993.5,487.3 993.7,484.6 993.9,483.9 994.1,481.2 994.3,487.7 994.6,485.9 994.8,485.2 995,480.8 995.2,481.6 995.4,482.7 995.7,483.5 995.9,482.5 996.1,486.6 996.3,484.7 996.5,486.8 996.8,485.5 997,482.8 997.2,489.6 997.4,482.9 997.6,484.4 997.9,483.7 998.1,484 998.3,485.2 998.5,487.7 998.7,489.2 999,488.6 999.2,491.1 999.4,487.6 999.6,490.8 999.8,489.6 1000.1,487.3 1000.3,488.8 1000.5,484.7 1000.7,491.1 1000.9,488.7 1001.2,484.6 1001.4,487.7 1001.6,488.9 1001.8,489 1002,485 1002.3,485.4 1002.5,487.2 1002.7,485.6 1002.9,487.4 1003.1,489.2 1003.4,485.9 1003.6,486.5 1003.8,490.8 1004,488.3 1004.2,486.6 1004.5,491.1 1004.7,489.1 1004.9,487.8 1005.1,491 1005.3,488.1 1005.6,488.5 1005.8,484.7 1006,490.4 1006.2,484 1006.4,487.3 1006.7,488.6 1006.9,488.6 1007.1,488.8 1007.3,482.8 1007.5,487.9 1007.8,485.7 1008,488.3 1008.2,485.7 1008.4,482 1008.6,483.5 1008.9,481.6 1009.1,482.5 1009.3,480.2 1009.5,487.4 1009.7,483.7 1010,485.3 1010.2,484.2 1010.4,482.7 1010.6,486.4 1010.8,486.9 1011.1,479.9 1011.3,481.8 1011.5,485.8 1011.7,483.6 1011.9,485.6 1012.2,480.2 1012.4,479.7 1012.6,479.9 1012.8,484.2 1013,484.4 1013.3,477.9 1013.5,482.3 1013.7,481.9 1013.9,481.8 1014.1,481.6 1014.4,482.6 1014.6,479.6 1014.8,477.1 1015,480.9 1015.2,476.9 1015.5,484.1 1015.7,478 1015.9,478.2 1016.1,483.1 1016.3,478.9 1016.6,477.6 1016.8,477.3 1017,480 1017.2,476.4 1017.4,478.5 1017.7,479.2 1017.9,477.6 1018.1,476.7 1018.3,482 1018.5,478 1018.8,481.1 1019,481.5 1019.2,477.3 1019.4,479.7 1019.6,474.7 1019.9,473.8 1020.1,472.7 1020.3,474.8 1020.5,474.4 1020.7,477.1 1021,474.3 1021.2,476.8 1021.4,471.8 1021.6,472.5 1021.8,469.4 1022.1,475.6 1022.3,469.5 1022.5,471.7 1022.7,468.4 1022.9,468.2 1023.2,468.9 1023.4,466 1023.6,462 1023.8,459.5 1024,455.9 1024.3,453 1024.5,449.4 1024.7,447 1024.9,443.3 1025.1,440.6 1025.4,436.5 1025.6,432.7 1025.8,428.8 1026,424.4 1026.2,421.3 1026.5,416.7 1026.7,420.2 1026.9,424.3 1027.1,429.1 1027.3,433.2 1027.6,438.4 1027.8,442.1 1028,446.6 1028.2,450.5 1028.4,452.5 1028.7,456.5 1028.9,458.6 1029.1,461.8 1029.3,463.5 1029.5,467 1029.8,469.1 1030,474 1030.2,474.3 1030.4,474.8 1030.6,476.8 1030.9,475.8 1031.1,470.4 1031.3,474.4 1031.5,476.6 1031.7,475.6 1032,472.2 1032.2,477.6 1032.4,478.8 1032.6,479.7 1032.8,474.2 1033.1,477.9 1033.3,475.8 1033.5,474.1 1033.7,480.1 1033.9,479.6 1034.2,481.6 1034.4,478.1 1034.6,481.1 1034.8,476 1035,478.4 1035.3,482.6 1035.5,481.4 1035.7,479.8 1035.9,482.1 1036.1,480.2 1036.4,475.7 1036.6,477.5 1036.8,481.8 1037,478.1 1037.2,482.4 1037.5,482.4 1037.7,482.7 1037.9,483.3 1038.1,480.3 1038.3,477.9 1038.6,476.4 1038.8,478.8 1039,478 1039.2,479.4 1039.4,479.9 1039.7,480.5 1039.9,482.3 1040.1,481.2 1040.3,476.8 1040.5,483.2 1040.8,484 1041,482.7 1041.2,483.5 1041.4,480.5 1041.6,482 1041.9,479 1042.1,478.9 1042.3,477.3 1042.5,479.9 1042.7,483.8 1043,483.6 1043.2,478.7 1043.4,479.1 1043.6,477.2 1043.8,477.1 1044.1,477.9 1044.3,478.2 1044.5,479.3 1044.7,479.6 1044.9,476.9 1045.2,478 1045.4,480.4 1045.6,482.3 1045.8,478.5 1046,479.2 1046.3,483.5 1046.5,477.2 1046.7,478.1 1046.9,478.5 1047.1,484.6 1047.4,481.1 1047.6,477.8 1047.8,477.6 1048,481.6 1048.2,479 1048.5,485.1 1048.7,479.8 1048.9,478.2 1049.1,483.5 1049.3,482.5 1049.6,479.3 1049.8,479.6 1050,483.7 1050.2,485.7 1050.4,487 1050.7,482.5 1050.9,480.9 1051.1,487.9 1051.3,480.5 1051.5,486.9 1051.8,480.7 1052,482.5 1052.2,484.1 1052.4,484.6 1052.6,488.4 1052.9,482.3 1053.1,486.3 1053.3,487.6 1053.5,487.1 1053.7,485.6 1054,488.1 1054.2,485.6 1054.4,482.9 1054.6,487.8 1054.8,484.1 1055.1,486.7 1055.3,487.6 1055.5,488.9 1055.7,484.4 1055.9,482.8 1056.2,488.5 1056.4,489.2 1056.6,489.3 1056.8,489.2 1057,486.2 1057.3,483.4 1057.5,486.8 1057.7,482.2 1057.9,485.7 1058.1,489.3 1058.4,484.7 1058.6,485 1058.8,485 1059,484.1 1059.2,485.6 1059.5,489.5 1059.7,486.7 1059.9,486.7 1060.1,490.2 1060.3,486.8 1060.6,488.2 1060.8,489.1 1061,486.6 1061.2,490.2 1061.4,488.6 1061.7,488.2 1061.9,484.5 1062.1,486.9 1062.3,485.5 1062.5,484.6 1062.8,490.9 1063,484.8 1063.2,491.7 1063.4,489.6 1063.6,485.9 1063.9,492.2 1064.1,487.6 1064.3,486.5 1064.5,485.7 1064.7,488.4 1065,489.6 1065.2,490.6 1065.4,489.5 1065.6,490.9 1065.8,486.5 1066.1,486.4 1066.3,485.9 1066.5,487.1 1066.7,489.6 1066.9,487.4 1067.2,489.1 1067.4,488.9 1067.6,488.9 1067.8,491.7 1068,486.4 1068.3,487.8 1068.5,484.9 1068.7,491.2 1068.9,490.3 1069.1,489.3 1069.4,486.6 1069.6,490.1 1069.8,490.1 1070,485.9 1070.2,487.9 1070.5,484.9 1070.7,485.5 1070.9,485 1071.1,488.5 1071.3,484.7 1071.6,485 1071.8,489.1 1072,485.8 1072.2,489.9 1072.4,489.9 1072.7,490.2 1072.9,488 1073.1,488 1073.3,486.4 1073.5,484.7 1073.8,487.9 1074,483.9 1074.2,489.2 1074.4,489.6 1074.6,486.5 1074.9,488.3 1075.1,485.9 1075.3,489.9 1075.5,485.6 1075.7,488.8 1076,487 1076.2,484.1 1076.4,486.8 1076.6,484.9 1076.8,488.5 1077.1,484.7 1077.3,485.2 1077.5,487.3 1077.7,481.3 1077.9,487.2 1078.2,482.3 1078.4,484 1078.6,486.6 1078.8,484.1 1079,485.8 1079.3,480.1 1079.5,477.4 1079.7,476 1079.9,473.6 1080.1,474.5 1080.4,475.4 1080.6,472.5 1080.8,469.9 1081,471 1081.2,470.7 1081.5,467.3 1081.7,468.6 1081.9,471.8 1082.1,474.1 1082.3,474.7 1082.6,473.3 1082.8,476.6 1083,471.6 1083.2,471.4 1083.4,472.4 1083.7,475 1083.9,479 1084.1,478.2 1084.3,474.3 1084.5,480.6 1084.8,474.5 1085,479.2 1085.2,478.2 1085.4,474.6 1085.6,480.6 1085.9,478.1 1086.1,481.6 1086.3,480.1 1086.5,481.5 1086.7,480.3 1087,477 1087.2,480.6 1087.4,479 1087.6,476.7 1087.8,481.1 1088.1,482.4 1088.3,480.8 1088.5,478 1088.7,480.4 1088.9,481.3 1089.2,478.6 1089.4,477.5 1089.6,480.2 1089.8,482.5 1090,479.4 1090.3,482.5 1090.5,477.9 1090.7,477 1090.9,482.7 1091.1,477.4 1091.4,479.2 1091.6,479.5 1091.8,479.1 1092,479 1092.2,476.2 1092.5,479.7 1092.7,477.3 1092.9,478.6 1093.1,483.1 1093.3,479.1 1093.6,481.1 1093.8,478.8 1094,479.2 1094.2,480.1 1094.4,476.7 1094.7,476.6 1094.9,477.2 1095.1,479.8 1095.3,482.6 1095.5,482.2 1095.8,480.2 1096,482.3 1096.2,481 1096.4,483.8 1096.6,478.7 1096.9,481.8 1097.1,478.5 1097.3,483.1 1097.5,478.1 1097.7,478.9 1098,481.6 1098.2,483 1098.4,482.3 1098.6,480.8 1098.8,481.4 1099.1,479.8 1099.3,481.1 1099.5,483 1099.7,482 1099.9,479.8 1100.2,484.4 1100.4,479.2 1100.6,481.6 1100.8,477.8 1101,480.6 1101.3,478.8 1101.5,484.5 1101.7,479.6 1101.9,483.8 1102.1,478.3 1102.4,477.8 1102.6,484.8 1102.8,482.9 1103,482.1 1103.2,477.4 1103.5,482.9 1103.7,482.2 1103.9,477.5 1104.1,482.6 1104.3,481.2 1104.6,477.6 1104.8,478.4 1105,482.3 1105.2,480.5 1105.4,481.7 1105.7,478.1 1105.9,477.8 1106.1,480.6 1106.3,477.7 1106.5,482.3 1106.8,482.2 1107,479.1 1107.2,485.1 1107.4,484.1 1107.6,483.4 1107.9,482.5 1108.1,478.6 1108.3,478.8 1108.5,482.7 1108.7,483.4 1109,480.1 1109.2,482.2 1109.4,480.5 1109.6,484.3 1109.8,479.7 1110.1,485.7 1110.3,479.7 1110.5,486.6 1110.7,484.1 1110.9,481.7 1111.2,480.3 1111.4,480.6 1111.6,482.4 1111.8,484 1112,481 1112.3,479 1112.5,480.9 1112.7,483.1 1112.9,481.7 1113.1,484.3 1113.4,480.5 1113.6,482.5 1113.8,482.8 1114,484.7 1114.2,484.9 1114.5,481.2 1114.7,485 1114.9,482.2 1115.1,486.4 1115.3,482.1 1115.6,488.6 1115.8,488.1 1116,485.2 1116.2,484.3 1116.4,482.7 1116.7,485.1 1116.9,482.3 1117.1,482.4 1117.3,484.7 1117.5,483.6 1117.8,483.4 1118,482.8 1118.2,489.6 1118.4,483.8 1118.6,482.7 1118.9,483.2 1119.1,487.3 1119.3,487.9 1119.5,490.1 1119.7,490 1120,489.6 1120.2,486.3 1120.4,483.8 1120.6,490.2 1120.8,490.6 1121.1,483.9 1121.3,483.7 1121.5,486.4 1121.7,489.6 1121.9,484.3 1122.2,484.7 1122.4,489.5 1122.6,484.2 1122.8,490.1 1123,487.7 1123.3,487.1 1123.5,489 1123.7,491.1 1123.9,490.1 1124.1,483.9 1124.4,488.3 1124.6,484.4 1124.8,488.7 1125,490.7 1125.2,487.8 1125.5,486.8 1125.7,489.6 1125.9,491 1126.1,490.9 1126.3,491.2 1126.6,490.8 1126.8,487.7 1127,488.6 1127.2,485.6 1127.4,486.1 1127.7,492.7 1127.9,486.1 1128.1,487.5 1128.3,487.2 1128.5,486.4 1128.8,492.3 1129,492.9 1129.2,488.9 1129.4,492 1129.6,490.4 1129.9,492.9 1130.1,491.4 1130.3,490.7 1130.5,486.8 1130.7,492 1131,486.8 1131.2,491.8 1131.4,489.6 1131.6,487 1131.8,489.2 1132.1,485.5 1132.3,490.5 1132.5,484.8 1132.7,484.5 1132.9,485.1 1133.2,491.3 1133.4,487.5 1133.6,485.9 1133.8,486.8 1134,485.7 1134.3,486.1 1134.5,490.5 1134.7,484.8 1134.9,484.5 1135.1,484 1135.4,486.4 1135.6,487.4 1135.8,483.7" fill="none" stroke="#1D9F4F" stroke-width="1.7" stroke-linejoin="round"/>
<polyline points="703.5,473.6 704.4,473.4 705.3,473.3 706.1,473.1 707,473 707.9,472.8 708.8,472.6 709.7,472.5 710.5,472.3 711.4,472.2 712.3,472 713.2,471.8 714.1,471.7 714.9,471.5 715.8,471.6 716.7,471.6 717.6,471.7 718.5,471.7 719.3,471.8 720.2,471.9 721.1,471.9 722,472 722.9,472.1 723.7,472.1 724.6,472.2 725.5,472.2 726.4,472.3 727.3,472.4 728.1,472.4 729,472.5 729.9,472.5 730.8,472.6 731.7,472.7 732.5,472.7 733.4,472.8 734.3,472.9 735.2,472.9 736.1,473 736.9,473 737.8,473.1 738.7,473.2 739.6,473.2 740.5,473.3 741.3,473.3 742.2,473.4 743.1,473.5 744,473.5 744.9,473.6 745.7,473.7 746.6,473.9 747.5,474 748.4,474.1 749.3,474.3 750.1,474.4 751,474.6 751.9,474.7 752.8,474.9 753.7,475 754.5,475.1 755.4,475.3 756.3,475.4 757.2,475.6 758.1,475.7 758.9,475.5 759.8,475.3 760.7,475.1 761.6,475 762.5,474.8 763.3,474.6 764.2,474.4 765.1,474.2 766,474.1 766.9,473.9 767.7,473.7 768.6,473.5 769.5,473.3 770.4,473.2 771.3,473 772.1,472.8 773,472.6 773.9,472.4 774.8,472.2 775.7,472.2 776.5,472.2 777.4,472.2 778.3,472.2 779.2,472.2 780.1,472.2 780.9,472.2 781.8,472.2 782.7,472.2 783.6,472.2 784.5,472.3 785.3,472.3 786.2,472.3 787.1,472.3 788,472.4 788.9,472.4 789.7,472.4 790.6,472.5 791.5,472.5 792.4,472.5 793.3,472.6 794.1,472.6 795,472.6 795.9,472.7 796.8,472.7 797.7,472.7 798.5,472.8 799.4,472.8 800.3,472.8 801.2,472.9 802.1,472.9 802.9,472.9 803.8,473 804.7,473 805.6,473.2 806.5,473.4 807.3,473.6 808.2,473.9 809.1,474.1 810,474.3 810.9,474.6 811.7,474.8 812.6,475.1 813.5,475.3 814.4,475.5 815.3,475.7 816.1,475.5 817,475.4 817.9,475.3 818.8,475.2 819.7,475 820.5,474.9 821.4,474.8 822.3,474.7 823.2,474.6 824.1,474.4 824.9,474.3 825.8,473.9 826.7,473.4 827.6,472.9 828.5,472.4 829.3,471.9 830.2,471.5 831.1,471 832,470.5 832.9,470.5 833.7,470.5 834.6,470.5 835.5,470.5 836.4,470.5 837.3,470.5 838.1,470.5 839,470.5 839.9,470.5 840.8,470.5 841.7,470.5 842.5,470.5 843.4,458.5 844.3,414 845.2,414 846.1,426.4 846.9,439.1 847.8,447.7 848.7,455.9 849.6,464.1 850.5,468.3 851.3,468.9 852.2,469.5 853.1,470 854,470.1 854.9,470.2 855.7,470.3 856.6,470.4 857.5,470.4 858.4,470.5 859.3,470.6 860.1,470.7 861,470.8 861.9,470.9 862.8,471 863.7,471.2 864.5,471.4 865.4,471.6 866.3,471.8 867.2,472 868.1,472.2 868.9,472.4 869.8,472.6 870.7,472.8 871.6,473 872.5,473.2 873.3,473.4 874.2,473.6 875.1,473.8 876,474.1 876.9,474.3 877.7,474.5 878.6,474.7 879.5,474.9 880.4,474.9 881.3,474.6 882.1,474.3 883,474 883.9,473.7 884.8,473.5 885.7,473.2 886.5,472.9 887.4,472.6 888.3,472.3 889.2,472 890.1,471.7 890.9,471.5 891.8,471.2 892.7,470.9 893.6,470.8 894.5,470.7 895.3,470.6 896.2,470.6 897.1,470.5 898,470.5 898.9,470.4 899.7,470.3 900.6,470.3 901.5,470.2 902.4,470.1 903.3,470.1 904.1,470 905,454.4 905.9,410.3 906.8,388.9 907.7,392.1 908.5,403.9 909.4,413.8 910.3,421.7 911.2,429.7 912.1,438.1 912.9,446.4 913.8,451.9 914.7,457.2 915.6,462.5 916.5,465.7 917.3,467 918.2,468 919.1,468.2 920,468.3 920.9,468.5 921.7,468.6 922.6,468.8 923.5,468.9 924.4,469.1 925.3,469.2 926.1,469.4 927,469.5 927.9,469.6 928.8,469.8 929.7,469.9 930.5,470.1 931.4,470.4 932.3,470.6 933.2,470.9 934.1,471.1 934.9,471.4 935.8,471.6 936.7,471.9 937.6,472.1 938.5,472.3 939.3,472.6 940.2,472.8 941.1,473.1 942,473.3 942.9,473.6 943.7,473.3 944.6,473 945.5,472.7 946.4,472.4 947.3,472.1 948.1,471.8 949,471.5 949.9,471.2 950.8,470.9 951.7,470.6 952.5,470.3 953.4,470 954.3,469.7 955.2,469.5 956.1,469.5 956.9,469.6 957.8,469.6 958.7,469.6 959.6,469.7 960.5,469.7 961.3,469.7 962.2,469.8 963.1,469.8 964,469.8 964.9,469.8 965.7,469.9 966.6,469.9 967.5,469.9 968.4,470 969.3,470 970.1,470 971,470.1 971.9,470.1 972.8,470.1 973.7,470.2 974.5,470.2 975.4,470.2 976.3,470.3 977.2,470.4 978.1,470.5 978.9,470.6 979.8,470.7 980.7,470.8 981.6,470.9 982.5,471 983.3,471.1 984.2,471.2 985.1,471.3 986,471.4 986.9,471.5 987.7,471.6 988.6,471.7 989.5,471.7 990.4,471.9 991.3,472 992.1,472.2 993,472.3 993.9,472.5 994.8,472.6 995.7,472.8 996.5,472.9 997.4,473.1 998.3,473.2 999.2,473.4 1000.1,473.5 1000.9,473.7 1001.8,473.8 1002.7,473.9 1003.6,473.8 1004.5,473.4 1005.3,473.1 1006.2,472.8 1007.1,472.4 1008,472.1 1008.9,471.8 1009.7,471.4 1010.6,471.1 1011.5,470.7 1012.4,470.4 1013.3,470.1 1014.1,469.7 1015,469.4 1015.9,469 1016.8,468.5 1017.7,468.1 1018.5,467.7 1019.4,467.3 1020.3,466.8 1021.2,466.4 1022.1,465.8 1022.9,462.2 1023.8,458.7 1024.7,455.1 1025.6,451.4 1026.5,447.7 1027.3,451.7 1028.2,456.1 1029.1,460.2 1030,462.4 1030.9,464.5 1031.7,466.7 1032.6,467.4 1033.5,467.7 1034.4,467.9 1035.3,468.1 1036.1,468.3 1037,468.5 1037.9,468.7 1038.8,468.9 1039.7,469.1 1040.5,469.3 1041.4,469.5 1042.3,469.8 1043.2,470 1044.1,470.2 1044.9,470.4 1045.8,470.6 1046.7,470.8 1047.6,470.9 1048.5,471.1 1049.3,471.3 1050.2,471.5 1051.1,471.7 1052,471.9 1052.9,472.1 1053.7,472.2 1054.6,472.4 1055.5,472.6 1056.4,472.8 1057.3,473 1058.1,473.2 1059,473.3 1059.9,473.5 1060.8,473.7 1061.7,473.9 1062.5,474.1 1063.4,474.3 1064.3,474.5 1065.2,474.6 1066.1,474.4 1066.9,474.3 1067.8,474.1 1068.7,474 1069.6,473.8 1070.5,473.6 1071.3,473.5 1072.2,473.3 1073.1,473.2 1074,473 1074.9,472.9 1075.7,472.7 1076.6,472.6 1077.5,472 1078.4,471.1 1079.3,470.2 1080.1,466.2 1081,465 1081.9,466.6 1082.8,468 1083.7,468.3 1084.5,468.4 1085.4,468.5 1086.3,468.5 1087.2,468.6 1088.1,468.6 1088.9,468.7 1089.8,468.7 1090.7,468.8 1091.6,468.9 1092.5,468.9 1093.3,469 1094.2,469 1095.1,469.1 1096,469.1 1096.9,469.2 1097.7,469.3 1098.6,469.3 1099.5,469.4 1100.4,469.5 1101.3,469.6 1102.1,469.7 1103,469.9 1103.9,470 1104.8,470.1 1105.7,470.3 1106.5,470.4 1107.4,470.6 1108.3,470.7 1109.2,470.8 1110.1,471 1110.9,471.1 1111.8,471.2 1112.7,471.4 1113.6,471.5 1114.5,471.6 1115.3,471.8 1116.2,471.9 1117.1,472.1 1118,472.2 1118.9,472.3 1119.7,472.5 1120.6,472.6 1121.5,472.8 1122.4,473 1123.3,473.2 1124.1,473.4 1125,473.6 1125.9,473.7 1126.8,473.9 1127.7,474.1 1128.5,474.3 1129.4,474.5 1130.3,474.6 1131.2,474.6 1132.1,474.6 1132.9,474.6 1133.8,474.6 1134.7,474.6 1135.6,474.6 1135.8,474.6" fill="none" stroke="#7F7F7F" stroke-width="1.7" stroke-linejoin="round"/>
<polyline points="703.5,428.3 703.7,428 703.9,431.6 704.2,428.1 704.4,427.3 704.6,427.8 704.8,430.6 705,429 705.3,428 705.5,429.6 705.7,425.4 705.9,430.2 706.1,424.5 706.4,424.1 706.6,422 706.8,412.8 707,431.1 707.2,427.6 707.5,423 707.7,424.7 707.9,430.5 708.1,428.4 708.3,423.1 708.6,431.6 708.8,425.1 709,433.2 709.2,426.9 709.4,423.5 709.7,432.7 709.9,423.7 710.1,427.1 710.3,430.6 710.5,426.4 710.8,423.7 711,424.9 711.2,430.3 711.4,423.8 711.6,433 711.9,432.6 712.1,433 712.3,420.8 712.5,420.5 712.7,426.8 713,429.8 713.2,430.6 713.4,424.6 713.6,424.4 713.8,426.3 714.1,413.3 714.3,422 714.5,428 714.7,429.4 714.9,425.5 715.2,432.3 715.4,430.8 715.6,428 715.8,432.8 716,422 716.3,427.2 716.5,428.7 716.7,430.8 716.9,427.5 717.1,423.6 717.4,423.9 717.6,428 717.8,421.4 718,424.5 718.2,431.8 718.5,430.2 718.7,422.6 718.9,430.6 719.1,432.2 719.3,430.8 719.6,420.3 719.8,431.5 720,426.3 720.2,422.8 720.4,429.5 720.7,432.2 720.9,430.3 721.1,422.6 721.3,428 721.5,429.8 721.8,423.3 722,429.3 722.2,416.3 722.4,433.7 722.6,422 722.9,426 723.1,426.9 723.3,433.5 723.5,421.3 723.7,428.1 724,427.5 724.2,421.2 724.4,432.7 724.6,424.5 724.8,425.7 725.1,424.5 725.3,426.7 725.5,421.5 725.7,430.5 725.9,430.7 726.2,429.4 726.4,431.5 726.6,429.9 726.8,429.3 727,424.5 727.3,417.8 727.5,426.1 727.7,429.1 727.9,428 728.1,420.8 728.4,428.9 728.6,424.7 728.8,431 729,420.9 729.2,424 729.5,431 729.7,433.9 729.9,428.3 730.1,425.9 730.3,423.6 730.6,427.8 730.8,430.9 731,428.1 731.2,431 731.4,435.4 731.7,427.3 731.9,430.3 732.1,426.5 732.3,434.7 732.5,428.4 732.8,426.7 733,433.7 733.2,433.3 733.4,430.7 733.6,428.3 733.9,428.5 734.1,431.6 734.3,426.2 734.5,435.8 734.7,436.3 735,436.1 735.2,429.1 735.4,433.6 735.6,437 735.8,436.1 736.1,429.3 736.3,428 736.5,423.9 736.7,425.1 736.9,426.4 737.2,423.7 737.4,426.1 737.6,435.2 737.8,425 738,435.6 738.3,429.9 738.5,431.9 738.7,427 738.9,431.8 739.1,435 739.4,434.3 739.6,436.9 739.8,435 740,432.4 740.2,431.5 740.5,436.6 740.7,427.3 740.9,434.2 741.1,430.5 741.3,432.5 741.6,427.8 741.8,426.9 742,438.1 742.2,428 742.4,438.7 742.7,426.9 742.9,438.1 743.1,434.7 743.3,438.1 743.5,430.4 743.8,432.1 744,438.2 744.2,428.2 744.4,437.5 744.6,428.2 744.9,437 745.1,426.8 745.3,435.5 745.5,440.6 745.7,442.2 746,434.7 746.2,441.4 746.4,443.1 746.6,432.5 746.8,434.7 747.1,433.1 747.3,441.4 747.5,432.1 747.7,430.9 747.9,434.1 748.2,432.2 748.4,439.5 748.6,436.9 748.8,434.8 749,438 749.3,437.4 749.5,430.7 749.7,439.6 749.9,432.8 750.1,441.8 750.4,430.5 750.6,440.5 750.8,443.2 751,435.6 751.2,435.9 751.5,441.4 751.7,436.8 751.9,439.5 752.1,442.6 752.3,439.5 752.6,443.6 752.8,434.8 753,440.2 753.2,435.4 753.4,440.3 753.7,441.3 753.9,441.6 754.1,442.5 754.3,446.7 754.5,444.2 754.8,435.8 755,434.4 755.2,435.4 755.4,436.9 755.6,443.8 755.9,434.2 756.1,441 756.3,441 756.5,441.1 756.7,441.3 757,434.5 757.2,438 757.4,438 757.6,447.2 757.8,435.5 758.1,445.8 758.3,443.7 758.5,437.5 758.7,442.8 758.9,435 759.2,435.8 759.4,443.5 759.6,437.8 759.8,444.9 760,445.2 760.3,444 760.5,443.9 760.7,445 760.9,440.6 761.1,436.8 761.4,444.6 761.6,441.5 761.8,436 762,441.7 762.2,442.6 762.5,434.9 762.7,437.3 762.9,438.7 763.1,444.9 763.3,437.4 763.6,444.1 763.8,445.6 764,438.8 764.2,443.9 764.4,434 764.7,442.2 764.9,444.5 765.1,435.6 765.3,443.3 765.5,438.6 765.8,445.7 766,435.6 766.2,435.7 766.4,437.5 766.6,439.2 766.9,443.5 767.1,433.1 767.3,432.9 767.5,435 767.7,441.8 768,441.4 768.2,430.9 768.4,433.9 768.6,439.7 768.8,431.2 769.1,439.3 769.3,431.7 769.5,439.5 769.7,427.6 769.9,429 770.2,438.5 770.4,429 770.6,438.5 770.8,433.4 771,430.5 771.3,429.7 771.5,425.3 771.7,435.4 771.9,431.7 772.1,422.5 772.4,426.7 772.6,430.1 772.8,427.3 773,428.4 773.2,424.1 773.5,422.6 773.7,421.5 773.9,422.4 774.1,425.7 774.3,425.1 774.6,423.6 774.8,424.6 775,431.1 775.2,430 775.4,425.9 775.7,423.1 775.9,421.7 776.1,424.8 776.3,424.4 776.5,421.4 776.8,424.9 777,434.3 777.2,424.6 777.4,429.3 777.6,433.1 777.9,430.6 778.1,423.8 778.3,423.6 778.5,433.8 778.7,433.9 779,430.6 779.2,430.1 779.4,426.2 779.6,427.3 779.8,436.3 780.1,431.6 780.3,426.8 780.5,435 780.7,426.2 780.9,435.7 781.2,431.7 781.4,437.3 781.6,425.8 781.8,432.8 782,438.7 782.3,431 782.5,435.1 782.7,429.9 782.9,427.5 783.1,426.7 783.4,432.6 783.6,426 783.8,428 784,431.6 784.2,431.5 784.5,435.5 784.7,435.2 784.9,430.3 785.1,429.1 785.3,435.6 785.6,431.6 785.8,428.7 786,436.1 786.2,431.1 786.4,427.7 786.7,434 786.9,433.3 787.1,435.8 787.3,431.1 787.5,428.7 787.8,435.1 788,430.9 788.2,423.3 788.4,424.2 788.6,422.9 788.9,420.9 789.1,420.5 789.3,428.2 789.5,420 789.7,424.5 790,423.4 790.2,425 790.4,430.5 790.6,423.4 790.8,426.7 791.1,422.5 791.3,431.7 791.5,433.2 791.7,429.8 791.9,430.1 792.2,424.8 792.4,432 792.6,424 792.8,434.2 793,427.5 793.3,423.2 793.5,427.6 793.7,426.4 793.9,423.1 794.1,428 794.4,424.1 794.6,432.9 794.8,426.4 795,425.4 795.2,430.3 795.5,433.7 795.7,430.2 795.9,433.9 796.1,434.7 796.3,436.1 796.6,434.7 796.8,434.2 797,430.7 797.2,425.3 797.4,436.5 797.7,434.1 797.9,433.1 798.1,428 798.3,430.9 798.5,429.9 798.8,430.9 799,436 799.2,432.1 799.4,419.8 799.6,435.4 799.9,436.6 800.1,436.1 800.3,435.1 800.5,436.8 800.7,433.6 801,432.7 801.2,431.9 801.4,426.9 801.6,426.1 801.8,426.6 802.1,436.6 802.3,433.8 802.5,434.5 802.7,437.1 802.9,434.8 803.2,435 803.4,437.6 803.6,427.9 803.8,435.2 804,438.7 804.3,436.9 804.5,426.5 804.7,435.2 804.9,430.3 805.1,431.4 805.4,431.9 805.6,429 805.8,437.5 806,436.2 806.2,430.4 806.5,438 806.7,437.4 806.9,435 807.1,433.6 807.3,434.8 807.6,440 807.8,442.2 808,443.4 808.2,443 808.4,436 808.7,437.7 808.9,432 809.1,440 809.3,437.9 809.5,439.9 809.8,435.6 810,439 810.2,442.6 810.4,436.9 810.6,437.5 810.9,441.7 811.1,444.4 811.3,446.7 811.5,442 811.7,437.7 812,448 812.2,442.4 812.4,439.8 812.6,443.2 812.8,439 813.1,439.1 813.3,442.4 813.5,443.6 813.7,441.8 813.9,444.7 814.2,441.1 814.4,447.9 814.6,437.2 814.8,451.8 815,448.7 815.3,444.5 815.5,442.2 815.7,436.9 815.9,442.6 816.1,446.5 816.4,441.7 816.6,440.7 816.8,437.1 817,440.2 817.2,447.7 817.5,443.9 817.7,444.1 817.9,446 818.1,436.1 818.3,429.1 818.6,444.2 818.8,442.2 819,437.1 819.2,435.7 819.4,435.1 819.7,441.3 819.9,445.3 820.1,437.3 820.3,441.5 820.5,436.2 820.8,443.9 821,437.1 821.2,438.3 821.4,439.7 821.6,433.7 821.9,443 822.1,435.3 822.3,435.2 822.5,431.8 822.7,431.6 823,437.5 823.2,440.5 823.4,441.1 823.6,434.8 823.8,435.4 824.1,442.1 824.3,435.2 824.5,435.1 824.7,440.3 824.9,431.3 825.2,434.2 825.4,427.8 825.6,434.7 825.8,437 826,432.1 826.3,431 826.5,434.1 826.7,437.3 826.9,431.4 827.1,425.7 827.4,425.3 827.6,434 827.8,432.2 828,425.2 828.2,427.6 828.5,429.4 828.7,432 828.9,430.6 829.1,422.6 829.3,430 829.6,426.8 829.8,421.6 830,423.4 830.2,432.1 830.4,431.8 830.7,425.5 830.9,431.7 831.1,431.6 831.3,425.4 831.5,425 831.8,430.9 832,431.5 832.2,421.5 832.4,430.5 832.6,427.9 832.9,428.3 833.1,426.7 833.3,432.4 833.5,420.5 833.7,421.7 834,419.8 834.2,429.8 834.4,424.9 834.6,422.9 834.8,424.4 835.1,419.3 835.3,429.6 835.5,420.8 835.7,424.1 835.9,428.3 836.2,425.5 836.4,428 836.6,418.4 836.8,421.8 837,419.7 837.3,426.6 837.5,428.5 837.7,427.1 837.9,428.5 838.1,423 838.4,431.6 838.6,419.1 838.8,429.9 839,429.6 839.2,427 839.5,430.2 839.7,428.5 839.9,422.3 840.1,420 840.3,422.6 840.6,420.5 840.8,421.3 841,423.2 841.2,422.4 841.4,427.7 841.7,424.6 841.9,421.3 842.1,416.7 842.3,420.4 842.5,420.6 842.8,424.4 843,419.5 843.2,426.8 843.4,418.7 843.6,416.3 843.9,377.9 844.1,345.5 844.3,325.9 844.5,321.2 844.7,325 845,325.7 845.2,321.1 845.4,320.2 845.6,324.8 845.8,328.7 846.1,330.8 846.3,340.1 846.5,340.1 846.7,348.6 846.9,350.4 847.2,357 847.4,361.3 847.6,366 847.8,369 848,369.2 848.3,373.3 848.5,378.7 848.7,382.1 848.9,389.9 849.1,392.9 849.4,390.1 849.6,392 849.8,393.2 850,399.8 850.2,399.6 850.5,393.3 850.7,394.6 850.9,398.4 851.1,401.1 851.3,403.6 851.6,402.6 851.8,405.1 852,409.3 852.2,413.9 852.4,424.9 852.7,422.8 852.9,421.7 853.1,423.8 853.3,430.8 853.5,426.9 853.8,425 854,430.3 854.2,424.6 854.4,426.7 854.6,422.3 854.9,423.5 855.1,427.3 855.3,431 855.5,422.2 855.7,433.8 856,433.1 856.2,427.8 856.4,433.9 856.6,429.4 856.8,430.1 857.1,429.2 857.3,433.3 857.5,422.8 857.7,426.6 857.9,431.9 858.2,429.6 858.4,421.9 858.6,425 858.8,428 859,424.8 859.3,431.6 859.5,432.3 859.7,424.7 859.9,426.8 860.1,425.4 860.4,429.8 860.6,429.4 860.8,430.9 861,429.7 861.2,432.3 861.5,431.9 861.7,430.6 861.9,422.6 862.1,430.9 862.3,432.9 862.6,423 862.8,426.6 863,429.9 863.2,429.1 863.4,426.5 863.7,431.8 863.9,428.4 864.1,426.7 864.3,429.7 864.5,422.2 864.8,430.7 865,431.3 865.2,428.4 865.4,424.8 865.6,433.3 865.9,427.8 866.1,428.4 866.3,424.3 866.5,425.3 866.7,432.7 867,427.4 867.2,433.2 867.4,427.9 867.6,426.7 867.8,428.5 868.1,442.6 868.3,430.7 868.5,433.9 868.7,436.3 868.9,436 869.2,447.8 869.4,431.7 869.6,434 869.8,438.6 870,442.9 870.3,438.5 870.5,442.3 870.7,434.1 870.9,441.9 871.1,441.3 871.4,433.8 871.6,438.7 871.8,442.5 872,437 872.2,436.7 872.5,436.4 872.7,434.9 872.9,433.6 873.1,437.3 873.3,441.1 873.6,442.7 873.8,436 874,440.8 874.2,441.1 874.4,437.3 874.7,442.2 874.9,432.7 875.1,435.8 875.3,432.1 875.5,440.7 875.8,432.9 876,438.5 876.2,440.2 876.4,440.5 876.6,428.9 876.9,439.7 877.1,441.5 877.3,437.1 877.5,442.5 877.7,437.6 878,438.6 878.2,437.1 878.4,442.8 878.6,440.8 878.8,439.8 879.1,438 879.3,443.1 879.5,434.5 879.7,442.9 879.9,435.2 880.2,441.4 880.4,432.3 880.6,432.8 880.8,438.1 881,443 881.3,436.1 881.5,440.2 881.7,434.8 881.9,435.4 882.1,432.1 882.4,437.4 882.6,442 882.8,443.6 883,442.5 883.2,441.5 883.5,437.5 883.7,435.3 883.9,439.1 884.1,434.9 884.3,436.3 884.6,441.1 884.8,431.5 885,437.6 885.2,433 885.4,440.1 885.7,440 885.9,433.9 886.1,428.3 886.3,434.5 886.5,433.6 886.8,429.7 887,435.4 887.2,432.6 887.4,433.6 887.6,427.7 887.9,432 888.1,434.1 888.3,430 888.5,433.6 888.7,426.8 889,430.7 889.2,433 889.4,433.4 889.6,428 889.8,424 890.1,432.1 890.3,431.6 890.5,429.7 890.7,421.4 890.9,427 891.2,429.4 891.4,418.5 891.6,420.1 891.8,429.4 892,419.4 892.3,423.4 892.5,423.7 892.7,428.7 892.9,423.9 893.1,428.7 893.4,420.9 893.6,410.8 893.8,428.3 894,423 894.2,420.9 894.5,425.6 894.7,427.5 894.9,424.1 895.1,420.2 895.3,423.6 895.6,417.8 895.8,429.1 896,416.2 896.2,424.2 896.4,420.8 896.7,419.5 896.9,423.7 897.1,421.6 897.3,422.2 897.5,423 897.8,422.3 898,428.2 898.2,422.1 898.4,422.3 898.6,418.3 898.9,428.2 899.1,421.7 899.3,421.9 899.5,427.6 899.7,429.9 900,430.2 900.2,423.5 900.4,423.2 900.6,422.7 900.8,430.1 901.1,420.7 901.3,419.7 901.5,420.8 901.7,422.4 901.9,426.7 902.2,426.4 902.4,425.1 902.6,429.2 902.8,427 903,431.6 903.3,419 903.5,427.2 903.7,422.7 903.9,420.9 904.1,423.8 904.4,427.4 904.6,422.3 904.8,425.6 905,418.4 905.2,430.3 905.5,420.9 905.7,424.8 905.9,419.5 906.1,392.8 906.3,376.9 906.6,358.2 906.8,349.1 907,349.5 907.2,348.3 907.4,346.7 907.7,352 907.9,353 908.1,359.3 908.3,364.2 908.5,362 908.8,369.6 909,373.1 909.2,373.6 909.4,372.1 909.6,375.2 909.9,376.5 910.1,373.3 910.3,374.4 910.5,373.5 910.7,377.4 911,375.2 911.2,374.4 911.4,375.8 911.6,375 911.8,382.6 912.1,380.8 912.3,383.9 912.5,390.8 912.7,390.9 912.9,394.6 913.2,400.8 913.4,399.4 913.6,405.8 913.8,399.2 914,399.9 914.3,408.4 914.5,405.5 914.7,407.6 914.9,404.4 915.1,408.7 915.4,404.3 915.6,412.1 915.8,411.3 916,413 916.2,412.9 916.5,419.6 916.7,416.4 916.9,421.6 917.1,422.3 917.3,422.6 917.6,412.3 917.8,416 918,416.5 918.2,426.3 918.4,415 918.7,425.7 918.9,424.5 919.1,422.7 919.3,418.4 919.5,421.1 919.8,416.1 920,424 920.2,418.6 920.4,426.1 920.6,421.7 920.9,426.5 921.1,422.6 921.3,424.7 921.5,420.7 921.7,426.9 922,423.7 922.2,418.2 922.4,421.6 922.6,417.2 922.8,422.3 923.1,426.7 923.3,419.2 923.5,424.4 923.7,421.2 923.9,422.7 924.2,419.3 924.4,424.8 924.6,425.3 924.8,423.4 925,428.9 925.3,427.2 925.5,425.2 925.7,425.5 925.9,430.8 926.1,419.3 926.4,427.1 926.6,430.3 926.8,429.1 927,432.2 927.2,424.7 927.5,421.8 927.7,429.2 927.9,422.2 928.1,422.2 928.3,428.6 928.6,431.6 928.8,426.3 929,426.5 929.2,434.4 929.4,427.5 929.7,434.4 929.9,431.8 930.1,427.7 930.3,429.1 930.5,434.6 930.8,424.5 931,433.8 931.2,416 931.4,426.3 931.6,422.7 931.9,429.8 932.1,424.7 932.3,424.2 932.5,424.8 932.7,428 933,425.7 933.2,428.3 933.4,435.1 933.6,430.8 933.8,425.7 934.1,428.4 934.3,425.6 934.5,424.5 934.7,432.6 934.9,436.3 935.2,434.9 935.4,435.7 935.6,436.8 935.8,431.3 936,432.3 936.3,434.6 936.5,426.9 936.7,436.1 936.9,437.4 937.1,416.4 937.4,437.2 937.6,427.5 937.8,426.8 938,432.1 938.2,436.3 938.5,436.6 938.7,439.1 938.9,433.4 939.1,432.4 939.3,438.3 939.6,439.5 939.8,431.6 940,439 940.2,429.3 940.4,440 940.7,439.3 940.9,441.8 941.1,441.6 941.3,436 941.5,428.7 941.8,428.9 942,439.1 942.2,438.6 942.4,429.1 942.6,439.4 942.9,430.7 943.1,428.4 943.3,437 943.5,437.5 943.7,426.3 944,426 944.2,434.5 944.4,428 944.6,434.3 944.8,430.5 945.1,434.9 945.3,431.6 945.5,437.5 945.7,427.2 945.9,431.3 946.2,429.7 946.4,432 946.6,425.2 946.8,431.8 947,433.7 947.3,424.6 947.5,434.3 947.7,433.2 947.9,432.4 948.1,429.2 948.4,427.8 948.6,428.5 948.8,427.4 949,430 949.2,432.1 949.5,428.6 949.7,422.7 949.9,427.8 950.1,428.2 950.3,426.7 950.6,422.9 950.8,429.4 951,428.9 951.2,431.7 951.4,428.4 951.7,423.1 951.9,419.7 952.1,418.7 952.3,427 952.5,422.5 952.8,430.1 953,418.2 953.2,427.9 953.4,419.6 953.6,427.5 953.9,423.8 954.1,425.3 954.3,425.9 954.5,421.6 954.7,425.1 955,417.7 955.2,414.1 955.4,415.2 955.6,421.6 955.8,418.7 956.1,414.7 956.3,417.7 956.5,414.2 956.7,416.1 956.9,421.1 957.2,423.6 957.4,417.7 957.6,423.8 957.8,423.1 958,414.3 958.3,422 958.5,421.9 958.7,425.8 958.9,413.8 959.1,417.7 959.4,416.9 959.6,425 959.8,425.9 960,424.6 960.2,421.1 960.5,427.9 960.7,428 960.9,426.4 961.1,419.2 961.3,424.3 961.6,419.9 961.8,419.8 962,421.4 962.2,431.2 962.4,426.7 962.7,423.7 962.9,428.9 963.1,424.6 963.3,417.8 963.5,428.5 963.8,422.3 964,429.3 964.2,422.5 964.4,418.3 964.6,416.3 964.9,426 965.1,419.2 965.3,420.8 965.5,426.9 965.7,422.5 966,415.7 966.2,415.9 966.4,415.5 966.6,415.9 966.8,424 967.1,422.7 967.3,426.4 967.5,425.3 967.7,416 967.9,425.8 968.2,417.7 968.4,422.5 968.6,416 968.8,423.6 969,427.2 969.3,417.7 969.5,421.2 969.7,419.1 969.9,428.2 970.1,429.7 970.4,420.4 970.6,422 970.8,426.4 971,419.9 971.2,417.6 971.5,419.6 971.7,430.3 971.9,420.1 972.1,428.6 972.3,424.6 972.6,430 972.8,420.5 973,425.9 973.2,427.8 973.4,427.4 973.7,423.7 973.9,426.6 974.1,432 974.3,431.1 974.5,431.8 974.8,423.5 975,427.2 975.2,431.7 975.4,427.8 975.6,431.7 975.9,430.1 976.1,420.5 976.3,422.4 976.5,427.9 976.7,427.1 977,425.3 977.2,426.9 977.4,424.4 977.6,429.9 977.8,425.6 978.1,420.2 978.3,423.2 978.5,426.1 978.7,422.2 978.9,430.6 979.2,423.1 979.4,423.5 979.6,428.7 979.8,424.1 980,421.5 980.3,428.3 980.5,425.3 980.7,427.3 980.9,428.5 981.1,418.4 981.4,424.9 981.6,428.6 981.8,425.3 982,430.8 982.2,424.6 982.5,420.8 982.7,418.8 982.9,422.1 983.1,429 983.3,428.4 983.6,430.2 983.8,423.7 984,419.9 984.2,419.7 984.4,420.2 984.7,422.4 984.9,422.3 985.1,430.6 985.3,432.4 985.5,425.7 985.8,432.7 986,427.2 986.2,423.3 986.4,425 986.6,431.3 986.9,429.4 987.1,427.8 987.3,428.9 987.5,422.3 987.7,421.3 988,430 988.2,429.2 988.4,422.1 988.6,430.5 988.8,433.6 989.1,426 989.3,431 989.5,429.8 989.7,422.6 989.9,431.4 990.2,422 990.4,429.5 990.6,429.5 990.8,435.3 991,430.8 991.3,427.5 991.5,424.9 991.7,427.4 991.9,432.8 992.1,433.6 992.4,430 992.6,435.4 992.8,433.6 993,436.9 993.2,434 993.5,428.3 993.7,439.3 993.9,435 994.1,434.2 994.3,430.9 994.6,438.4 994.8,440.8 995,431.6 995.2,428.8 995.4,443.7 995.7,442.2 995.9,435.2 996.1,432.4 996.3,440.8 996.5,506 996.6,506 996.8,440.8 996.5,439.1 996.8,437.4 997,432.9 997.2,433.2 997.4,441.9 997.6,435.4 997.9,436.9 998.1,438.2 998.3,436.4 998.5,437.6 998.7,434.1 999,438 999.2,437.5 999.4,430.8 999.6,441.5 999.8,435.3 1000.1,442.1 1000.3,442.5 1000.5,437.7 1000.7,439.2 1000.9,442.3 1001.2,441 1001.4,440.5 1001.6,433.8 1001.8,437.4 1002,436.2 1002.3,447.9 1002.5,434.2 1002.7,434 1002.9,433.3 1003.1,433.2 1003.4,445.4 1003.6,444.2 1003.8,443.4 1004,419.4 1004.2,442.5 1004.5,436.4 1004.7,433.4 1004.9,434.2 1005.1,431.6 1005.3,429.9 1005.6,432.1 1005.8,430.2 1006,437.3 1006.2,432.3 1006.4,440.2 1006.7,430 1006.9,429.2 1007.1,434.3 1007.3,437.3 1007.5,436.3 1007.8,436.4 1008,434.7 1008.2,433.2 1008.4,432.8 1008.6,428.1 1008.9,432.3 1009.1,428.8 1009.3,429.7 1009.5,429.7 1009.7,436.8 1010,431.8 1010.2,434.4 1010.4,424.7 1010.6,430.2 1010.8,431.9 1011.1,423.1 1011.3,429.8 1011.5,433 1011.7,429.9 1011.9,429.2 1012.2,420.9 1012.4,431.7 1012.6,423.2 1012.8,421.6 1013,420 1013.3,420.4 1013.5,418.4 1013.7,418.9 1013.9,428.6 1014.1,423.9 1014.4,422.6 1014.6,423.9 1014.8,418.5 1015,420.5 1015.2,425.5 1015.5,416.1 1015.7,422.7 1015.9,411.8 1016.1,421.3 1016.3,421.8 1016.6,418.9 1016.8,418.5 1017,413.2 1017.2,410.1 1017.4,415.1 1017.7,414.3 1017.9,418.1 1018.1,415.3 1018.3,415 1018.5,408.7 1018.8,411.2 1019,408.7 1019.2,414.1 1019.4,409 1019.6,413.2 1019.9,407.9 1020.1,412.5 1020.3,406.3 1020.5,405 1020.7,403.9 1021,403.9 1021.2,403.8 1021.4,402.9 1021.6,401.4 1021.8,403.3 1022.1,396.7 1022.3,394.8 1022.5,391.5 1022.7,398.2 1022.9,391 1023.2,395.1 1023.4,389.7 1023.6,388.2 1023.8,392.9 1024,386.4 1024.3,385.3 1024.5,387.9 1024.7,388.1 1024.9,380.7 1025.1,380.4 1025.4,378.7 1025.6,378.6 1025.8,381.2 1026,378.4 1026.2,383 1026.5,382 1026.7,381.7 1026.9,384 1027.1,383.6 1027.3,385.9 1027.6,390.7 1027.8,388.6 1028,391.5 1028.2,390.4 1028.4,395.4 1028.7,394.9 1028.9,390.1 1029.1,392.7 1029.3,398.6 1029.5,407.2 1029.8,399 1030,397.9 1030.2,413.5 1030.4,403.3 1030.6,407.7 1030.9,415 1031.1,405.1 1031.3,413.9 1031.5,409.5 1031.7,409 1032,418.1 1032.2,416.2 1032.4,410.8 1032.6,417.2 1032.8,410.2 1033.1,411.7 1033.3,411.6 1033.5,421.6 1033.7,417.1 1033.9,423.1 1034.2,413.6 1034.4,416.7 1034.6,423.9 1034.8,425.3 1035,424 1035.3,419.2 1035.5,416.2 1035.7,423.9 1035.9,425.7 1036.1,427.3 1036.4,427.8 1036.6,420.2 1036.8,421.7 1037,418.3 1037.2,417.6 1037.5,418 1037.7,420.2 1037.9,418.5 1038.1,422.3 1038.3,422.3 1038.6,415.1 1038.8,423.7 1039,415.5 1039.2,416.8 1039.4,419.1 1039.7,424.6 1039.9,419.1 1040.1,417.4 1040.3,421.1 1040.5,414.7 1040.8,425 1041,420 1041.2,415.8 1041.4,417.6 1041.6,418.4 1041.9,415.2 1042.1,426.4 1042.3,419.5 1042.5,421.2 1042.7,425.1 1043,423.2 1043.2,419.9 1043.4,413.7 1043.6,419.6 1043.8,423.8 1044.1,421.4 1044.3,424.4 1044.5,427.3 1044.7,424.2 1044.9,424 1045.2,425.6 1045.4,420.4 1045.6,427.1 1045.8,424.4 1046,417.6 1046.3,417 1046.5,425.1 1046.7,426.9 1046.9,425.9 1047.1,429.9 1047.4,421.2 1047.6,420.3 1047.8,430 1048,424.4 1048.2,426.6 1048.5,419.2 1048.7,430.9 1048.9,429.1 1049.1,425.1 1049.3,422.6 1049.6,426.7 1049.8,428.2 1050,431.2 1050.2,422.5 1050.4,420.2 1050.7,421.9 1050.9,420.2 1051.1,421.1 1051.3,426.8 1051.5,424.6 1051.8,429.4 1052,422.6 1052.2,422.4 1052.4,431.5 1052.6,426.2 1052.9,425.8 1053.1,432.2 1053.3,430.9 1053.5,427.2 1053.7,428.7 1054,422 1054.2,422.1 1054.4,427.3 1054.6,430.5 1054.8,431.2 1055.1,435.3 1055.3,428.2 1055.5,431.9 1055.7,429.8 1055.9,428.8 1056.2,436.1 1056.4,426.9 1056.6,438.6 1056.8,439.4 1057,430.3 1057.3,439.1 1057.5,440.7 1057.7,429.9 1057.9,443 1058.1,438.6 1058.4,438.7 1058.6,440.3 1058.8,442.4 1059,425.9 1059.2,439.7 1059.5,441.4 1059.7,441.2 1059.9,434 1060.1,432.3 1060.3,436.5 1060.6,436.3 1060.8,439.3 1061,439 1061.2,438 1061.4,440.9 1061.7,442.9 1061.9,442.1 1062.1,433.6 1062.3,432.1 1062.5,431.7 1062.8,439.2 1063,442.9 1063.2,443.4 1063.4,441.5 1063.6,441.5 1063.9,436 1064.1,434.9 1064.3,440.1 1064.5,445.1 1064.7,439.4 1065,438.9 1065.2,436.8 1065.4,437.9 1065.5,506 1065.7,506 1065.8,437.9 1065.6,432.3 1065.8,434.6 1066.1,431.3 1066.3,440.2 1066.5,438.7 1066.7,432.3 1066.9,436.4 1067.2,438.2 1067.4,441.3 1067.6,435.3 1067.8,430.9 1068,441.7 1068.3,437.4 1068.5,438.5 1068.7,430 1068.9,438.6 1069.1,441 1069.4,429.6 1069.6,434.8 1069.8,441.7 1070,432.7 1070.2,433 1070.5,432.4 1070.7,440 1070.9,437.3 1071.1,436.2 1071.3,434.1 1071.5,506 1071.7,506 1071.8,434.1 1071.6,429.9 1071.8,439.7 1072,434.4 1072.2,432.9 1072.4,429.4 1072.7,432.4 1072.9,434.6 1073.1,440.9 1073.2,506 1073.4,506 1073.5,440.9 1073.3,435.7 1073.5,428.6 1073.8,431.4 1074,427.8 1074.2,437.8 1074.4,426.4 1074.6,431.8 1074.9,437 1075.1,431.9 1075.3,436.4 1075.5,432.9 1075.7,424.4 1076,426 1076.2,423.6 1076.4,432.1 1076.6,427.5 1076.8,423.5 1077.1,432.7 1077.3,426.6 1077.5,431.5 1077.7,426.7 1077.9,421.1 1078.2,428.7 1078.4,424 1078.6,421.9 1078.8,415.3 1079,421.7 1079.3,423.2 1079.5,415.6 1079.7,420.3 1079.9,415.2 1080.1,421.8 1080.4,412.4 1080.6,418.1 1080.8,407.3 1081,411 1081.2,420.4 1081.5,417.8 1081.7,418.6 1081.9,419.8 1082.1,420.2 1082.3,419.7 1082.6,419.7 1082.8,409.9 1083,411.8 1083.2,412.7 1083.4,419.5 1083.7,416.1 1083.9,422.9 1084.1,418 1084.3,414 1084.5,419.9 1084.8,421.2 1085,414.1 1085.2,417.7 1085.4,415.1 1085.6,422.5 1085.9,423.7 1086.1,417.3 1086.3,414.9 1086.5,405.7 1086.7,416.5 1087,415.3 1087.2,414.4 1087.4,419.6 1087.6,421.4 1087.8,414.6 1088.1,423.8 1088.3,422.2 1088.5,425.2 1088.7,422.1 1088.9,417.3 1089.2,420.2 1089.4,419.5 1089.6,421.1 1089.8,420.8 1090,415.9 1090.3,417.4 1090.5,404.9 1090.7,417.5 1090.9,415.9 1091.1,416.4 1091.4,417.3 1091.6,419.5 1091.8,415.9 1092,424.4 1092.2,415.3 1092.5,418.4 1092.7,418 1092.9,413 1093.1,424.4 1093.3,419.1 1093.6,420.2 1093.8,416.6 1094,424.9 1094.2,421.3 1094.4,418.6 1094.7,414.4 1094.9,417.1 1095.1,419.3 1095.3,425.1 1095.5,413.1 1095.8,413.5 1096,423.5 1096.2,414 1096.4,419.9 1096.6,424 1096.9,420.9 1097.1,417.1 1097.3,430.2 1097.5,414.9 1097.7,422.1 1098,421 1098.2,415.9 1098.4,416.9 1098.6,422.5 1098.8,426.1 1099.1,428.5 1099.3,426.2 1099.5,417.2 1099.7,416.7 1099.9,425.1 1100.2,422.1 1100.4,418.9 1100.6,417.5 1100.8,417.1 1101,418.7 1101.3,420.2 1101.5,417.5 1101.7,427 1101.9,419.1 1102.1,424.6 1102.4,415.8 1102.6,421.9 1102.8,421.8 1103,425 1103.2,427.4 1103.5,426 1103.7,422.4 1103.9,421.2 1104.1,418.3 1104.3,430.3 1104.6,425.1 1104.8,425.4 1105,429.6 1105.2,422.4 1105.4,425.9 1105.7,420.4 1105.9,423.1 1106.1,429.1 1106.3,427.6 1106.5,431.4 1106.8,427.5 1107,430.8 1107.2,428 1107.4,431.2 1107.6,429.7 1107.9,422.3 1108.1,423.6 1108.3,420.9 1108.5,422.5 1108.7,422.7 1109,422.3 1109.2,422.7 1109.4,423 1109.6,428.4 1109.8,429.9 1110.1,430.4 1110.3,434 1110.5,410.5 1110.7,425.5 1110.9,430.7 1111.2,424.6 1111.4,429.3 1111.6,424.6 1111.8,431.2 1112,421 1112.3,424.9 1112.5,425.9 1112.7,422.2 1112.9,431.2 1113.1,420.9 1113.4,424.9 1113.6,431.7 1113.8,426.8 1114,432.3 1114.2,425.5 1114.5,427.6 1114.7,425.7 1114.9,423.9 1115.1,430 1115.3,432.7 1115.6,427.3 1115.8,426.6 1116,431.3 1116.2,433.9 1116.4,428.2 1116.7,431.7 1116.9,424.6 1117.1,425.9 1117.3,436 1117.5,426.1 1117.8,433.1 1118,426.4 1118.2,437.9 1118.4,428.9 1118.6,434.3 1118.9,428.1 1119.1,427.7 1119.3,430 1119.5,436.6 1119.7,431.5 1120,437.6 1120.2,433.7 1120.4,436.8 1120.6,438.4 1120.8,437.3 1121.1,428.9 1121.3,429 1121.5,436 1121.7,432.2 1121.9,429 1122.2,436.4 1122.4,437.3 1122.6,432 1122.8,439.2 1123,431.3 1123.3,437.6 1123.5,434.6 1123.7,434.2 1123.9,438.1 1124.1,440.9 1124.4,438.3 1124.6,442.1 1124.8,434.8 1125,442.6 1125.2,443.4 1125.5,441.1 1125.7,442.3 1125.9,436.1 1126.1,436 1126.3,451.8 1126.6,435 1126.8,436.1 1127,441.9 1127.2,439.1 1127.4,439.1 1127.7,438 1127.9,440.1 1128.1,442.2 1128.3,443.5 1128.5,443.4 1128.8,443 1129,436.8 1129.2,436.1 1129.4,443.7 1129.6,435.8 1129.7,506 1129.9,506 1130,435.8 1129.9,434.3 1130.1,441.1 1130.3,437 1130.5,438.2 1130.7,438.3 1131,434.9 1131.2,442 1131.4,430.7 1131.6,442.3 1131.8,436.6 1132.1,439.4 1132.3,437.8 1132.5,437.2 1132.7,436.5 1132.8,506 1133,506 1133.1,436.5 1132.9,428.5 1133.2,433.9 1133.4,429.7 1133.6,427.5 1133.8,428.1 1134,434.1 1134.3,430.9 1134.5,437.1 1134.7,438.1 1134.9,427.4 1135.1,426.6 1135.4,425.6 1135.6,431.7 1135.8,430.1" fill="none" stroke="#F9AF2F" stroke-width="1.6" stroke-linejoin="round"/>
<line x1="703" y1="506.5" x2="1136" y2="506.5" stroke="#6E7079" stroke-width="1"/>
<line x1="725.3" y1="506" x2="725.3" y2="510" stroke="#6E7079" stroke-width="1"/>
<text x="725.3" y="519.5" font-size="10" fill="#6E7079" text-anchor="middle" font-weight="normal" font-style="normal" >4</text>
<line x1="787.2" y1="506" x2="787.2" y2="510" stroke="#6E7079" stroke-width="1"/>
<text x="787.2" y="519.5" font-size="10" fill="#6E7079" text-anchor="middle" font-weight="normal" font-style="normal" >5</text>
<line x1="849.0" y1="506" x2="849.0" y2="510" stroke="#6E7079" stroke-width="1"/>
<text x="849.0" y="519.5" font-size="10" fill="#6E7079" text-anchor="middle" font-weight="normal" font-style="normal" >6</text>
<line x1="910.9" y1="506" x2="910.9" y2="510" stroke="#6E7079" stroke-width="1"/>
<text x="910.9" y="519.5" font-size="10" fill="#6E7079" text-anchor="middle" font-weight="normal" font-style="normal" >7</text>
<line x1="972.8" y1="506" x2="972.8" y2="510" stroke="#6E7079" stroke-width="1"/>
<text x="972.8" y="519.5" font-size="10" fill="#6E7079" text-anchor="middle" font-weight="normal" font-style="normal" >8</text>
<line x1="1034.6" y1="506" x2="1034.6" y2="510" stroke="#6E7079" stroke-width="1"/>
<text x="1034.6" y="519.5" font-size="10" fill="#6E7079" text-anchor="middle" font-weight="normal" font-style="normal" >9</text>
<line x1="1096.5" y1="506" x2="1096.5" y2="510" stroke="#6E7079" stroke-width="1"/>
<text x="1096.5" y="519.5" font-size="10" fill="#6E7079" text-anchor="middle" font-weight="normal" font-style="normal" >10</text>
<line x1="703.5" y1="306" x2="703.5" y2="506" stroke="#8FD0AE" stroke-width="1.5"/>
<line x1="1136" y1="306" x2="1136" y2="506" stroke="#9B9B9B" stroke-width="1.2"/>
<line x1="1200.5" y1="305" x2="1200.5" y2="506" stroke="#F9C97A" stroke-width="1.2"/>
<text x="696" y="308.4" font-size="10" fill="#4FAA7A" text-anchor="end" font-weight="normal" font-style="normal" >50 MGD</text>
<text x="1143.5" y="308.4" font-size="10" fill="#7A7A7A" text-anchor="start" font-weight="normal" font-style="normal" >100 in.</text>
<text x="1207" y="308.4" font-size="10" fill="#F9B949" text-anchor="start" font-weight="normal" font-style="normal" >5 ft/s</text>
<text x="696" y="348.4" font-size="10" fill="#4FAA7A" text-anchor="end" font-weight="normal" font-style="normal" >40 MGD</text>
<text x="1143.5" y="348.4" font-size="10" fill="#7A7A7A" text-anchor="start" font-weight="normal" font-style="normal" >80 in.</text>
<text x="1207" y="348.4" font-size="10" fill="#F9B949" text-anchor="start" font-weight="normal" font-style="normal" >4 ft/s</text>
<text x="696" y="388.4" font-size="10" fill="#4FAA7A" text-anchor="end" font-weight="normal" font-style="normal" >30 MGD</text>
<text x="1143.5" y="388.4" font-size="10" fill="#7A7A7A" text-anchor="start" font-weight="normal" font-style="normal" >60 in.</text>
<text x="1207" y="388.4" font-size="10" fill="#F9B949" text-anchor="start" font-weight="normal" font-style="normal" >3 ft/s</text>
<text x="696" y="428.4" font-size="10" fill="#4FAA7A" text-anchor="end" font-weight="normal" font-style="normal" >20 MGD</text>
<text x="1143.5" y="428.4" font-size="10" fill="#7A7A7A" text-anchor="start" font-weight="normal" font-style="normal" >40 in.</text>
<text x="1207" y="428.4" font-size="10" fill="#F9B949" text-anchor="start" font-weight="normal" font-style="normal" >2 ft/s</text>
<text x="696" y="468.4" font-size="10" fill="#4FAA7A" text-anchor="end" font-weight="normal" font-style="normal" >10 MGD</text>
<text x="1143.5" y="468.4" font-size="10" fill="#7A7A7A" text-anchor="start" font-weight="normal" font-style="normal" >20 in.</text>
<text x="1207" y="468.4" font-size="10" fill="#F9B949" text-anchor="start" font-weight="normal" font-style="normal" >1 ft/s</text>
<text x="696" y="508.4" font-size="10" fill="#4FAA7A" text-anchor="end" font-weight="normal" font-style="normal" >0 MGD</text>
<text x="1143.5" y="508.4" font-size="10" fill="#7A7A7A" text-anchor="start" font-weight="normal" font-style="normal" >0 in.</text>
<text x="1207" y="508.4" font-size="10" fill="#F9B949" text-anchor="start" font-weight="normal" font-style="normal" >0 ft/s</text>
<text x="690" y="288" font-size="11" fill="#1E9E58" text-anchor="start" font-weight="bold" font-style="italic" >MGD</text>
<text x="1130.5" y="288" font-size="11" fill="#777" text-anchor="start" font-weight="bold" font-style="italic" >in.</text>
<text x="1192" y="288" font-size="11" fill="#F9B949" text-anchor="start" font-weight="bold" font-style="italic" >ft/s</text>
<circle cx="689.2" cy="541.8" r="5.6" fill="#1A9E50"/>
<text x="703.4" y="545.2" font-size="10" fill="#555" text-anchor="start" font-weight="normal" font-style="normal" >Flow</text>
<circle cx="738" cy="541.8" r="5.6" fill="#808080"/>
<text x="752.3" y="545.2" font-size="10" fill="#555" text-anchor="start" font-weight="normal" font-style="normal" >ISCO Level</text>
<circle cx="814.2" cy="541.8" r="5.6" fill="#F8B133"/>
<text x="828.9" y="545.2" font-size="10" fill="#555" text-anchor="start" font-weight="normal" font-style="normal" >Velocity</text>
<g fill="none" stroke="#707070" stroke-width="1">
  <path d="M1074.5,254 v12.5 h9.5 v-10 h-12" stroke="#4A9FCC"/>
  <path d="M1094.5,259.5 v7 h9.5 v-10 h-8.5 M1097.5,254 l-2.5,2.5 l2.5,2.5"/>
  <path d="M1114.5,254.5 h6.5 l2.5,2.5 v10 h-9 z M1116.5,259.5 h5 M1116.5,261.5 h5 M1116.5,263.5 h5"/>
  <path d="M1133,262 h3 l2,-6.5 l2.5,8 l1.5,-3 h3.5 M1133,266.5 h12.5"/>
  <path d="M1156,266.5 h12 M1156.5,264.5 v-4 h2 v4 z M1159.5,264.5 v-5 h2 v5 z M1162.5,264.5 v-7 h2 v7 z M1165.5,264.5 v-9 h2 v9 z" stroke-width="0.9"/>
  <path d="M1189.5,262 a6.5,6.5 0 0 1 -11.8,1.8 M1177.6,258.5 a6.5,6.5 0 0 1 11.8,-1.8 M1189.6,253.8 v3.4 h-3.2 M1177.4,266.2 v-3.4 h3.2"/>
  <path d="M1205.5,254 v10.5 M1201,260 l4.5,4.5 l4.5,-4.5 M1200,263.5 v3 h11 v-3"/>
</g>
</svg>
</body>
</html>
